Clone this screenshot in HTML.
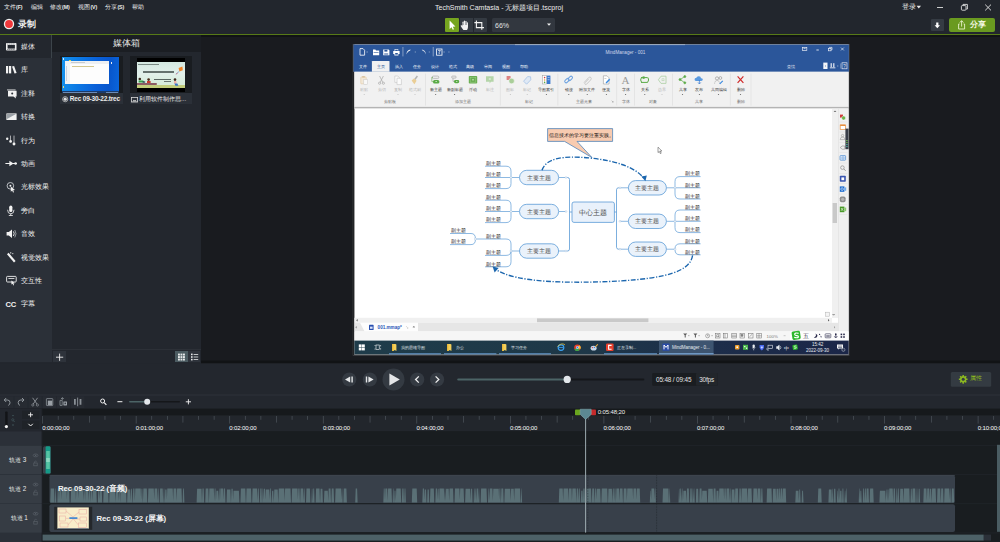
<!DOCTYPE html>
<html lang="zh">
<head>
<meta charset="utf-8">
<title>TechSmith Camtasia</title>
<style>
*{box-sizing:border-box;margin:0;padding:0}
html,body{width:1000px;height:542px;overflow:hidden;background:#1a1c20;font-family:"Liberation Sans",sans-serif;color:#e6e6e6}
.a{position:absolute}
.t{position:absolute;white-space:nowrap;line-height:1}
#menubar{left:0;top:0;width:1000px;height:34px;background:#22262d}
#greenline{left:0;top:34px;width:1000px;height:1px;background:#577a17}
#sidebar{left:0;top:35px;width:52px;height:328.4px;background:#2b3038}
#sidesel{left:0;top:35px;width:52px;height:22.6px;background:#23272e;border-right:1px solid #3c444a}
#bin{left:52px;top:35px;width:149px;height:328.4px;background:#23272e}
#binhead{left:52px;top:35px;width:149px;height:17px;background:#1b1e23}
#canvasbg{left:201px;top:35px;width:799px;height:329px;background:#191b1f;border-top:2.6px solid #111315}
#playbar{left:0;top:362px;width:1000px;height:33px;background:#23272e}
#tltool{left:0;top:395px;width:1000px;height:14px;background:#23272e;border-top:1px solid #2e333a}
#tl{left:0;top:409px;width:1000px;height:133px;background:#191d20}
.mi{font-size:6.3px;color:#ececec;top:3.8px}.ml{font-size:5.3px;font-weight:bold;letter-spacing:-0.1px}
.si{font-size:6.5px;color:#f2f2f2;left:21.4px;margin-top:1.5px}
</style>
</head>
<body>
<div class="a" id="menubar"></div>
<div class="a" id="greenline"></div>
<div class="a" id="canvasbg"></div>
<div class="a" id="sidebar"></div>
<div class="a" id="sidesel"></div>
<div class="a" id="bin"></div>
<div class="a" id="binhead"></div>
<div class="a" id="playbar"></div>
<div class="a" id="tltool"></div>
<div class="a" id="tl"></div>

<!-- MENU -->
<div class="t mi" style="left:4px">文件<span class="ml">(F)</span></div>
<div class="t mi" style="left:30.6px">编辑</div>
<div class="t mi" style="left:50px">修改<span class="ml">(M)</span></div>
<div class="t mi" style="left:78.4px">视图<span class="ml">(V)</span></div>
<div class="t mi" style="left:105.4px">分享<span class="ml">(S)</span></div>
<div class="t mi" style="left:131.8px">帮助</div>
<div class="t" style="left:435px;top:3.6px;font-size:7px;color:#ececec">TechSmith Camtasia - 无标题项目.tscproj</div>
<div class="t mi" style="left:902px;font-size:6.5px;top:3.6px">登录</div>


<!-- TOOLBAR -->
<svg class="a" style="left:3px;top:18px" width="12" height="12" viewBox="0 0 12 12"><circle cx="6" cy="6" r="5.2" fill="#f0f0f0"/><circle cx="6" cy="6" r="3.9" fill="#f0373a"/></svg>
<div class="t" style="left:18px;top:20px;font-size:8.5px;font-weight:bold;color:#f0f0f0">录制</div>

<!-- SIDEBAR -->
<svg class="a" style="left:0;top:35px" width="52" height="327" viewBox="0 0 52 327" fill="#f2f2f2">
 <!-- media film -->
 <g><rect x="6" y="8" width="10.5" height="7.6" rx="0.8"/><rect x="7.6" y="10" width="7.3" height="3.6" fill="#23272e"/>
 <g fill="#23272e"><rect x="7.4" y="8.6" width="1" height="0.8"/><rect x="9.4" y="8.6" width="1" height="0.8"/><rect x="11.4" y="8.6" width="1" height="0.8"/><rect x="13.4" y="8.6" width="1" height="0.8"/><rect x="7.4" y="14.2" width="1" height="0.8"/><rect x="9.4" y="14.2" width="1" height="0.8"/><rect x="11.4" y="14.2" width="1" height="0.8"/><rect x="13.4" y="14.2" width="1" height="0.8"/></g></g>
 <!-- library -->
 <g transform="translate(0,23.4)"><rect x="6" y="7.6" width="2.2" height="7.4"/><rect x="9" y="7.6" width="2.2" height="7.4"/><path d="M12 8.2 L14.1 7.6 L16.6 14.6 L14.5 15.2 Z"/></g>
 <!-- annotation -->
 <g transform="translate(0,46.8)"><path d="M7 7.6 H15.6 V8.6 H7Z" opacity=".8"/><path d="M8 9 H16.6 V14.6 H15.6 L16 16.6 L13.4 14.6 H8 Z"/><circle cx="12.2" cy="11.8" r="1" fill="#2b3038"/></g>
 <!-- transition -->
 <g transform="translate(0,70.2)"><rect x="6.4" y="8.2" width="10.2" height="6.6"/><path d="M7 13.8 L16 8.8 L7 8.8Z" fill="#9aa0a6"/></g>
 <!-- behaviors -->
 <g transform="translate(0,93.6)"><circle cx="7.2" cy="10.2" r="1.2"/><circle cx="10.6" cy="12.8" r="1.35"/><circle cx="14" cy="15.4" r="1.45"/><rect x="10.2" y="7" width="0.8" height="5" opacity=".8"/><rect x="13.6" y="7" width="0.8" height="7.6" opacity=".8"/></g>
 <!-- animation -->
 <g transform="translate(0,117)"><rect x="5.4" y="11" width="11.4" height="1"/><path d="M9.4 8.8 L13.6 11.5 L9.4 14.2Z"/><circle cx="15.6" cy="11.5" r="1.3"/></g>
 <!-- cursor fx -->
 <g transform="translate(0,140.4)"><circle cx="10.4" cy="10.4" r="3.3" fill="none" stroke="#c8ccd0" stroke-width="0.9"/><circle cx="10.4" cy="10.4" r="1" /><path d="M10.8 11.2 L15 14.6 L13.2 14.8 L14 16.8 L13 17.2 L12.2 15.2 L10.8 16.4Z"/></g>
 <!-- voice -->
 <g transform="translate(0,163.8)"><rect x="9.2" y="6.8" width="3.2" height="6.4" rx="1.6"/><path d="M7.6 11 Q7.6 15 10.8 15 Q14 15 14 11" fill="none" stroke="#f2f2f2" stroke-width="0.8"/><rect x="10.4" y="15" width="0.8" height="1.6"/><rect x="8.8" y="16.4" width="4" height="0.8"/></g>
 <!-- audio -->
 <g transform="translate(0,187.2)"><path d="M6.6 9.8 H8.8 L12 7.2 V15.8 L8.8 13.2 H6.6Z"/><path d="M13.4 9.2 Q15 11.5 13.4 13.8" fill="none" stroke="#f2f2f2" stroke-width="0.9"/><path d="M14.8 7.8 Q17.2 11.5 14.8 15.2" fill="none" stroke="#aeb4b8" stroke-width="0.8"/></g>
 <!-- visual fx -->
 <g transform="translate(0,210.6)"><path d="M7 8.6 L8.6 7.2 L15.6 15.4 L14 16.8Z"/><rect x="10.4" y="6.4" width="0.8" height="1.6"/><rect x="12" y="7.8" width="1.4" height="0.7"/></g>
 <!-- interactivity -->
 <g transform="translate(0,234)"><rect x="6.6" y="7.4" width="9.6" height="5.6" rx="0.8" fill="none" stroke="#f2f2f2" stroke-width="0.9"/><rect x="8.4" y="9.2" width="6" height="0.8"/><path d="M11.4 11.4 L14.8 14.2 L13.4 14.4 L14 16 L13.2 16.4 L12.6 14.8 L11.4 15.6Z"/></g>
</svg>
<div class="t" style="left:5.5px;top:300.6px;font-size:7.6px;font-weight:bold;color:#f2f2f2;letter-spacing:-0.2px">CC</div>
<div class="t si" style="top:42.5px">媒体</div>
<div class="t si" style="top:65.9px">库</div>
<div class="t si" style="top:89.3px">注释</div>
<div class="t si" style="top:112.7px">转换</div>
<div class="t si" style="top:136.1px">行为</div>
<div class="t si" style="top:159.5px">动画</div>
<div class="t si" style="top:182.9px">光标效果</div>
<div class="t si" style="top:206.3px">旁白</div>
<div class="t si" style="top:229.7px">音效</div>
<div class="t si" style="top:253.1px">视觉效果</div>
<div class="t si" style="top:276.5px">交互性</div>
<div class="t si" style="top:299.9px">字幕</div>

<!-- MEDIA BIN -->
<div class="t" style="left:52px;width:149px;text-align:center;top:39px;font-size:8.5px;color:#e8e8e8">媒体箱</div>


<!-- window controls -->
<svg class="a" style="left:915px;top:0" width="85" height="15" viewBox="0 0 85 15"><path d="M1.6 5.8 H6 L3.8 8.4Z" fill="#e8e8e8"/><rect x="22" y="7" width="6" height="0.9" fill="#e0e0e0"/><rect x="46.4" y="5.6" width="4.6" height="4.6" rx="0.8" fill="none" stroke="#e0e0e0" stroke-width="0.9"/><path d="M48 5.4 V4.4 H52.4 V9 H51.4" fill="none" stroke="#e0e0e0" stroke-width="0.9"/><path d="M70.2 4.6 L76 10.4 M76 4.6 L70.2 10.4" stroke="#e8e8e8" stroke-width="0.9"/></svg>
<!-- tool buttons -->
<div class="a" style="left:445px;top:18px;width:14px;height:13.5px;background:#76a51f;border-radius:1px"></div>
<div class="a" style="left:459.5px;top:18px;width:13.5px;height:13.5px;background:#343a42"></div>
<div class="a" style="left:473.5px;top:18px;width:13.5px;height:13.5px;background:#343a42;border-radius:0 1px 1px 0"></div>
<svg class="a" style="left:445px;top:18px" width="42" height="14" viewBox="0 0 42 14"><path d="M4.6 2.6 L4.6 11 L6.6 9.2 L7.8 11.8 L9 11.2 L7.8 8.8 L10.4 8.6Z" fill="#fff"/>
<g fill="#f2f2f2"><rect x="17.5" y="3.6" width="1.15" height="5" rx="0.57"/><rect x="18.95" y="2.6" width="1.15" height="6" rx="0.57"/><rect x="20.4" y="3" width="1.15" height="5.6" rx="0.57"/><rect x="21.85" y="4.2" width="1.1" height="4.6" rx="0.55"/><path d="M17.5 7 H22.95 V9 C22.95 10.4 22.4 11.2 22 12 H18.4 C17.4 10.8 16.4 9.4 15.7 8 C15.5 7.2 16.4 6.9 16.9 7.6 L17.5 8.6Z"/></g>
<path d="M31.4 2.4 V9.6 H39" fill="none" stroke="#f4f4f4" stroke-width="1.1"/><path d="M29.4 4.6 H36.8 V11.8" fill="none" stroke="#f4f4f4" stroke-width="1.1"/></svg>
<div class="a" style="left:492px;top:18px;width:62.5px;height:13.5px;background:#32373f;border-radius:1.5px"></div>
<div class="t" style="left:495px;top:21.5px;font-size:7px;color:#e0e0e0">66%</div>
<svg class="a" style="left:546px;top:22px" width="6" height="5" viewBox="0 0 6 5"><path d="M1 1.4 H5 L3 3.8Z" fill="#f0f0f0"/></svg>
<div class="a" style="left:931px;top:18.5px;width:12.5px;height:12.5px;background:#353b43;border-radius:1px"></div>
<svg class="a" style="left:931px;top:18.5px" width="13" height="13" viewBox="0 0 13 13"><path d="M5.2 3.4 H7.4 V6.2 H9 L6.3 9.2 L3.6 6.2 H5.2Z" fill="#fff"/></svg>
<div class="a" style="left:949px;top:18px;width:45.5px;height:13.7px;background:#6a9a20;border-radius:2px"></div>
<svg class="a" style="left:956px;top:19px" width="12" height="12" viewBox="0 0 12 12"><path d="M3.6 5 H2.6 V10 H8.6 V5 H7.6" fill="none" stroke="#e6f0c8" stroke-width="0.9"/><path d="M5.6 7.6 V2 M3.8 3.6 L5.6 1.6 L7.4 3.6" fill="none" stroke="#e6f0c8" stroke-width="0.9"/></svg>
<div class="t" style="left:970px;top:20.8px;font-size:8px;font-weight:bold;color:#f4f8e4">分享</div>

<!-- media items -->
<div class="a" style="left:60.4px;top:56.4px;width:62.3px;height:48px;background:#191c20"></div>
<div class="a" style="left:60.4px;top:93.2px;width:62.3px;height:11.2px;background:#2b3038"></div>
<div class="a" style="left:62.3px;top:57.4px;width:57.1px;height:35.4px;background:linear-gradient(95deg,#1492ec 0%,#0c78e4 30%,#0a60d8 60%,#0856cc 82%,#0a66dc 100%)"></div>
<div class="a" style="left:64.7px;top:60.9px;width:44.1px;height:23px;background:#fdfdfd"></div>
<div class="a" style="left:64.7px;top:60.9px;width:44.1px;height:3.6px;background:#eef0f2"></div>
<div class="a" style="left:64.7px;top:64.4px;width:5.8px;height:19.4px;background:#f0f2f4"></div>
<div class="a" style="left:71px;top:62.4px;width:14px;height:1px;background:#c8ccd0"></div>
<div class="a" style="left:72px;top:65.6px;width:22px;height:0.9px;background:#d4c890"></div>
<div class="a" style="left:66px;top:66px;width:1.2px;height:15px;background:#c8d4e0"></div>
<div class="a" style="left:68.6px;top:60.4px;width:2.6px;height:1px;background:#e8d84a"></div>
<div class="a" style="left:63px;top:58.2px;width:1.2px;height:1.6px;background:#d8e8f8"></div>
<div class="a" style="left:63px;top:86px;width:1.2px;height:1.8px;background:#e8d87a"></div>
<div class="a" style="left:110.6px;top:62.2px;width:1.2px;height:1.8px;background:#e8ecf0"></div>
<div class="a" style="left:62.3px;top:91.4px;width:57.1px;height:1.4px;background:#1a3a6a"></div>
<div class="a" style="left:63px;top:91.7px;width:34px;height:0.7px;background:#6a8ab8"></div>
<div class="a" style="left:106px;top:91.7px;width:12px;height:0.7px;background:#6a8ab8"></div>
<div class="a" style="left:130px;top:56.4px;width:62.2px;height:48px;background:#191c20"></div>
<div class="a" style="left:130px;top:93.2px;width:62.2px;height:11.2px;background:#2b3038"></div>
<div class="a" style="left:136.8px;top:57.6px;width:47.9px;height:34.8px;background:#000"></div>
<div class="a" style="left:136.8px;top:62.1px;width:47.9px;height:26.4px;background:linear-gradient(180deg,#d4e8e0 0%,#e2f0ea 45%,#d8ecdc 80%)"></div>
<div class="a" style="left:136.8px;top:84.9px;width:47.9px;height:3.6px;background:#c2cd7c"></div>
<div class="a" style="left:136.8px;top:82.8px;width:19.9px;height:2.6px;background:#8c5c64;border-radius:0 1px 1px 0"></div>
<div class="a" style="left:142.8px;top:71.3px;width:31px;height:1.3px;background:#66726e"></div>
<div class="a" style="left:154px;top:78.9px;width:17px;height:1px;background:#5a6662"></div>
<div class="a" style="left:163.5px;top:81.3px;width:7.5px;height:0.9px;background:#6a7672"></div>
<div class="a" style="left:137.6px;top:63.6px;width:21.4px;height:0.8px;background:#7a8a84"></div>
<svg class="a" style="left:136.8px;top:62.1px" width="48" height="27" viewBox="0 0 48 27"><path d="M41.6 6 L45.4 4.4 L45.8 8.2 L42.4 9.4Z" fill="#f08428"/><path d="M42.2 9.4 L38.8 12.2" stroke="#5a8ad0" stroke-width="0.6"/><path d="M40.4 10.8 l-1 1.6" stroke="#e04a4a" stroke-width="0.6"/>
<circle cx="2.8" cy="17" r="1.3" fill="#3a2a20"/><path d="M1.6 18.4 h4.6 l1.4 2.2 h-6z" fill="#36a04a"/><rect x="5.6" y="19.4" width="2.6" height="1.2" fill="#2a3a5a"/>
<circle cx="11.6" cy="17.6" r="1.3" fill="#4a2a18"/><rect x="10" y="19" width="3.6" height="2" fill="#c8382e"/>
<circle cx="38" cy="17.6" r="1.3" fill="#3a2418"/><rect x="37" y="19" width="2.4" height="2.8" fill="#f0b0a8"/><path d="M37.4 21.6 h3 l1 2.2 h-3z" fill="#3a74c8"/></svg>
<svg class="a" style="left:61.6px;top:95.8px" width="7" height="7" viewBox="0 0 7 7"><circle cx="3.2" cy="3.2" r="2.6" fill="none" stroke="#d8d8d8" stroke-width="0.7"/><circle cx="3.2" cy="3.2" r="1.6" fill="#e0e0e0"/></svg>
<div class="t" style="left:69.8px;top:95.7px;font-size:6.5px;font-weight:bold;color:#ececec;letter-spacing:-0.2px">Rec 09-30-22.trec</div>
<svg class="a" style="left:131.2px;top:96.6px" width="8" height="6" viewBox="0 0 8 6"><rect x="0.4" y="0.4" width="6.2" height="4.6" fill="none" stroke="#d8d8d8" stroke-width="0.8"/><path d="M1.4 4.4 L2.8 2.8 L3.8 3.6 L4.6 3 L5.8 4.4Z" fill="#d8d8d8"/></svg>
<div class="t" style="left:139px;top:96px;font-size:6.2px;color:#ececec">利用软件制作思...</div>
<!-- bin bottom bar -->
<div class="a" style="left:52px;top:349.4px;width:149px;height:14px;background:#23272e;border-top:1px solid #2c3037"></div>
<div class="a" style="left:52.8px;top:350.8px;width:12.8px;height:11.6px;background:#2e333b"></div>
<svg class="a" style="left:52.8px;top:350.6px" width="13" height="12" viewBox="0 0 13 12"><path d="M6.6 2.6 V9.8 M3 6.2 H10.2" stroke="#f0f0f0" stroke-width="0.9"/></svg>
<div class="a" style="left:174.5px;top:350.8px;width:13px;height:11.6px;background:#4c5c62"></div>
<div class="a" style="left:188px;top:350.8px;width:11.8px;height:11.6px;background:#2e333b"></div>
<svg class="a" style="left:174.7px;top:350.6px" width="26" height="12" viewBox="0 0 26 12" fill="#e8eaec"><rect x="3" y="2.6" width="1.9" height="1.9"/><rect x="5.5" y="2.6" width="1.9" height="1.9"/><rect x="8" y="2.6" width="1.9" height="1.9"/><rect x="3" y="5.1" width="1.9" height="1.9"/><rect x="5.5" y="5.1" width="1.9" height="1.9"/><rect x="8" y="5.1" width="1.9" height="1.9"/><rect x="3" y="7.6" width="1.9" height="1.9"/><rect x="5.5" y="7.6" width="1.9" height="1.9"/><rect x="8" y="7.6" width="1.9" height="1.9"/>
<rect x="16" y="2.6" width="1.6" height="1.6"/><rect x="18.6" y="3" width="4.6" height="0.8"/><rect x="16" y="5.2" width="1.6" height="1.6"/><rect x="18.6" y="5.6" width="4.6" height="0.8"/><rect x="16" y="7.8" width="1.6" height="1.6"/><rect x="18.6" y="8.2" width="4.6" height="0.8"/></svg>

<!-- CANVAS-START -->
<svg class="a" style="left:352px;top:43px" width="499" height="314" viewBox="352 43 499 314" font-family="Liberation Sans, sans-serif">
<rect x="352.8" y="44" width="496.6" height="311.6" fill="#5c5e62"/>
<rect x="353.3" y="71.8" width="496" height="283.4" fill="#0b0c0e"/>
<rect x="354.4" y="44.6" width="494.2" height="310.2" fill="#ffffff"/>
<rect x="353.5" y="44.6" width="495.4" height="27.2" fill="#2b569a"/>
<rect x="515" y="44.4" width="170" height="0.7" fill="#c8d0dc" opacity=".8"/>
<g fill="#fff" stroke="none">
<path d="M360 48.6 h3 l1.6 1.6 v5 h-4.6z" fill="none" stroke="#fff" stroke-width="0.8"/>
<rect x="366.6" y="51.6" width="1" height="0.8" opacity=".8"/>
<path d="M373 49.6 h2.4 l0.6 0.8 h3.2 v4.8 h-6.2z"/><rect x="373.6" y="52" width="5" height="0.6" fill="#2b569a"/>
<path d="M383.2 49.4 h5.4 l0.8 0.8 v5 h-6.2z"/><rect x="384.4" y="49.8" width="3" height="1.8" fill="#2b569a"/><rect x="384.2" y="53" width="4" height="2" fill="#2b569a" opacity=".5"/>
<path d="M394.6 49 h3.6 v2 h1.4 v3 h-1.2 v1.4 h-4 v-1.4 h-1.2 v-3 h1.4z"/><rect x="395.2" y="53" width="2.6" height="1.6" fill="#2b569a"/><rect x="395.2" y="49.6" width="2.6" height="1.4" fill="#2b569a"/>
<rect x="402.6" y="47" width="0.7" height="9.4" opacity=".6"/>
<path d="M406.4 54.4 c0.2 -2.6 1.6 -4.4 4.2 -4.8 l-0.4 1 c-1.6 0.6 -2.6 1.6 -3.8 3.8z"/>
<rect x="414.8" y="51.6" width="0.9" height="0.8" opacity=".7"/>
<path d="M426 54.4 c-0.2 -2.6 -1.6 -4.4 -4.2 -4.8 l0.4 1 c1.6 0.6 2.6 1.6 3.8 3.8z" opacity=".75"/>
<rect x="428.8" y="51.6" width="0.9" height="0.8" opacity=".6"/>
<rect x="432.8" y="47" width="0.7" height="9.4" opacity=".6"/>
<rect x="436.6" y="49" width="5.4" height="6.2" fill="none" stroke="#fff" stroke-width="0.8"/><path d="M438 50.4 h2.4 l-1.2 2 v1.6" fill="none" stroke="#fff" stroke-width="0.7"/>
<rect x="443.6" y="51.6" width="0.9" height="0.8" opacity=".8"/><rect x="448.6" y="51.4" width="0.7" height="1.2" opacity=".6"/>
</g>
<text x="625.4" y="53.8" font-size="4.6" fill="#cfd8ea" text-anchor="middle">MindManager - 001</text>
<g stroke="#e8ecf4" stroke-width="0.7" fill="none"><rect x="802.4" y="47.4" width="4.4" height="3.2"/><path d="M803.6 48.6 h2"/><path d="M816.4 50 h2.4" stroke-width="0.9"/><rect x="828.4" y="48.4" width="2.6" height="2.4"/><path d="M829.4 48.2 v-0.8 h2.6 v2.4 h-0.8"/><path d="M841 47.6 l2.8 2.8 m0 -2.8 l-2.8 2.8"/></g>
<path d="M371.9 71.8 V61.6 q0 -0.7 0.7 -0.7 H388.8 q0.7 0 0.7 0.7 V71.8z" fill="#f1f1f1"/>
<text x="363" y="67.6" font-size="4.3" fill="#fff" text-anchor="middle">文件</text>
<text x="380.8" y="67.6" font-size="4.3" fill="#2b569a" text-anchor="middle">主页</text>
<text x="398.6" y="67.6" font-size="4.3" fill="#fff" text-anchor="middle">插入</text>
<text x="416.6" y="67.6" font-size="4.3" fill="#fff" text-anchor="middle">任务</text>
<text x="434.6" y="67.6" font-size="4.3" fill="#fff" text-anchor="middle">设计</text>
<text x="452.6" y="67.6" font-size="4.3" fill="#fff" text-anchor="middle">格式</text>
<text x="470.4" y="67.6" font-size="4.3" fill="#fff" text-anchor="middle">高级</text>
<text x="488.4" y="67.6" font-size="4.3" fill="#fff" text-anchor="middle">审阅</text>
<text x="506" y="67.6" font-size="4.3" fill="#fff" text-anchor="middle">视图</text>
<text x="523.8" y="67.6" font-size="4.3" fill="#fff" text-anchor="middle">帮助</text>
<text x="791.4" y="67.6" font-size="4.3" fill="#e0e6f0" text-anchor="middle">查找</text>
<rect x="823.3" y="62.6" width="4.2" height="6.4" fill="#f4f6fa"/><rect x="825" y="65.6" width="0.8" height="0.8" fill="#2b569a"/>
<g fill="#e8ecf4"><rect x="829.8" y="67.4" width="5.6" height="0.9"/><rect x="830.6" y="63.2" width="1.2" height="4"/><rect x="833.2" y="63.2" width="1.2" height="4"/><rect x="837.4" y="65.6" width="0.8" height="0.8"/><rect x="840.2" y="63.4" width="0.5" height="5.2" opacity=".6"/></g>
<rect x="842" y="62.8" width="5" height="6" fill="none" stroke="#e8ecf4" stroke-width="0.7"/><text x="844.5" y="67.6" font-size="4.6" fill="#e8ecf4" text-anchor="middle">?</text>
<rect x="354.4" y="71.8" width="494.2" height="35.4" fill="#f1f1f1"/>
<rect x="354.4" y="106.9" width="494.2" height="1.5" fill="#b4b4b4"/>
<rect x="354.4" y="108.3" width="494.2" height="0.6" fill="#e4e4e4"/>
<rect x="425.2" y="73.6" width="0.6" height="32" fill="#dcdcdc"/>
<rect x="499.9" y="73.6" width="0.6" height="32" fill="#dcdcdc"/>
<rect x="557.6" y="73.6" width="0.6" height="32" fill="#dcdcdc"/>
<rect x="616.5" y="73.6" width="0.6" height="32" fill="#dcdcdc"/>
<rect x="634.4000000000001" y="73.6" width="0.6" height="32" fill="#dcdcdc"/>
<rect x="672.0" y="73.6" width="0.6" height="32" fill="#dcdcdc"/>
<rect x="729.9000000000001" y="73.6" width="0.6" height="32" fill="#dcdcdc"/>
<rect x="750.7" y="73.6" width="0.6" height="32" fill="#dcdcdc"/>
<text x="390" y="103.2" font-size="4.3" fill="#6e6e6e" text-anchor="middle">剪贴板</text>
<text x="463" y="103.2" font-size="4.3" fill="#6e6e6e" text-anchor="middle">添加主题</text>
<text x="529.3" y="103.2" font-size="4.3" fill="#6e6e6e" text-anchor="middle">标记</text>
<text x="584.3" y="103.2" font-size="4.3" fill="#6e6e6e" text-anchor="middle">主题元素</text>
<text x="625.6" y="103.2" font-size="4.3" fill="#6e6e6e" text-anchor="middle">字体</text>
<text x="653.2" y="103.2" font-size="4.3" fill="#6e6e6e" text-anchor="middle">对象</text>
<text x="699.4" y="103.2" font-size="4.3" fill="#6e6e6e" text-anchor="middle">共享</text>
<text x="740.5" y="103.2" font-size="4.3" fill="#6e6e6e" text-anchor="middle">删除</text>
<path d="M611.6 100.6 l1.6 1.6 m0 -1.2 v1.2 h-1.2" stroke="#888" stroke-width="0.4" fill="none"/>
<text x="364.2" y="90.8" font-size="4.4" fill="#b4b4b4" text-anchor="middle">粘贴</text>
<path d="M363.5 94 h1.4 l-0.7 0.9z" fill="#b4b4b4"/>
<text x="381.5" y="90.8" font-size="4.4" fill="#b4b4b4" text-anchor="middle">剪切</text>
<text x="398" y="90.8" font-size="4.4" fill="#b4b4b4" text-anchor="middle">复制</text>
<path d="M397.3 94 h1.4 l-0.7 0.9z" fill="#b4b4b4"/>
<text x="415" y="90.8" font-size="4.4" fill="#b4b4b4" text-anchor="middle">格式刷</text>
<path d="M414.3 94 h1.4 l-0.7 0.9z" fill="#b4b4b4"/>
<text x="435.7" y="90.8" font-size="4.4" fill="#3c3c3c" text-anchor="middle">新主题</text>
<path d="M435.0 94 h1.4 l-0.7 0.9z" fill="#3c3c3c"/>
<text x="454.6" y="90.8" font-size="4.4" fill="#3c3c3c" text-anchor="middle">新副标题</text>
<path d="M453.90000000000003 94 h1.4 l-0.7 0.9z" fill="#3c3c3c"/>
<text x="473" y="90.8" font-size="4.4" fill="#3c3c3c" text-anchor="middle">浮动</text>
<text x="489.8" y="90.8" font-size="4.4" fill="#b4b4b4" text-anchor="middle">标注</text>
<text x="510.4" y="90.8" font-size="4.4" fill="#b4b4b4" text-anchor="middle">图标</text>
<path d="M509.7 94 h1.4 l-0.7 0.9z" fill="#b4b4b4"/>
<text x="527.2" y="90.8" font-size="4.4" fill="#b4b4b4" text-anchor="middle">标记</text>
<path d="M526.5 94 h1.4 l-0.7 0.9z" fill="#b4b4b4"/>
<text x="546.4" y="90.8" font-size="4.4" fill="#3c3c3c" text-anchor="middle">导图索引</text>
<path d="M545.6999999999999 94 h1.4 l-0.7 0.9z" fill="#3c3c3c"/>
<text x="568.8" y="90.8" font-size="4.4" fill="#3c3c3c" text-anchor="middle">链接</text>
<path d="M568.0999999999999 94 h1.4 l-0.7 0.9z" fill="#3c3c3c"/>
<text x="587.2" y="90.8" font-size="4.4" fill="#3c3c3c" text-anchor="middle">附加文件</text>
<path d="M586.5 94 h1.4 l-0.7 0.9z" fill="#3c3c3c"/>
<text x="606.4" y="90.8" font-size="4.4" fill="#3c3c3c" text-anchor="middle">便笺</text>
<path d="M605.6999999999999 94 h1.4 l-0.7 0.9z" fill="#3c3c3c"/>
<text x="625.6" y="90.8" font-size="4.4" fill="#3c3c3c" text-anchor="middle">字体</text>
<path d="M624.9 94 h1.4 l-0.7 0.9z" fill="#3c3c3c"/>
<text x="644.8" y="90.8" font-size="4.4" fill="#3c3c3c" text-anchor="middle">关系</text>
<path d="M644.0999999999999 94 h1.4 l-0.7 0.9z" fill="#3c3c3c"/>
<text x="662" y="90.8" font-size="4.4" fill="#b4b4b4" text-anchor="middle">边界</text>
<path d="M661.3 94 h1.4 l-0.7 0.9z" fill="#b4b4b4"/>
<text x="682.5" y="90.8" font-size="4.4" fill="#3c3c3c" text-anchor="middle">共享</text>
<path d="M681.8 94 h1.4 l-0.7 0.9z" fill="#3c3c3c"/>
<text x="699.4" y="90.8" font-size="4.4" fill="#3c3c3c" text-anchor="middle">发布</text>
<path d="M698.6999999999999 94 h1.4 l-0.7 0.9z" fill="#3c3c3c"/>
<text x="718.5" y="90.8" font-size="4.4" fill="#3c3c3c" text-anchor="middle">共同编辑</text>
<path d="M717.8 94 h1.4 l-0.7 0.9z" fill="#3c3c3c"/>
<text x="740.5" y="90.8" font-size="4.4" fill="#3c3c3c" text-anchor="middle">删除</text>
<path d="M739.8 94 h1.4 l-0.7 0.9z" fill="#3c3c3c"/>
<g opacity=".55"><rect x="360.8" y="77" width="5.4" height="6.8" rx="0.6" fill="#f4e2c4" stroke="#d8a860" stroke-width="0.6"/><rect x="362.2" y="76" width="2.6" height="1.6" fill="#c8a060"/><rect x="363.8" y="79.6" width="3.8" height="4.8" fill="#fff" stroke="#aaa" stroke-width="0.5"/></g>
<g stroke="#a8a8a8" stroke-width="0.7" fill="none"><path d="M379.6 76 l3.2 6.4 M383.4 76 l-3.2 6.4"/><circle cx="379.6" cy="83.2" r="1.1"/><circle cx="383.4" cy="83.2" r="1.1"/></g>
<g stroke="#c4c4c4" stroke-width="0.6" fill="#fbfbfb"><path d="M394.8 76 h3 l1.4 1.4 v5 h-4.4z"/><path d="M397 78.2 h3 l1.4 1.4 v5 h-4.4z"/></g>
<g opacity=".7"><path d="M416.8 75.6 l1.2 1 l-2.6 3.4 l-1.2 -1z" fill="#9a9a9a"/><path d="M411.6 80.4 l2.4 -2 l2.6 2.4 l-2.2 3.4z" fill="#e8c070"/></g>
<g><rect x="432.2" y="76" width="6.6" height="2.6" rx="1.2" fill="#e8e8e8" stroke="#9a9a9a" stroke-width="0.5"/><path d="M433 77.4 h-1.2 v4.2 h1.2" fill="none" stroke="#6aaa50" stroke-width="0.6"/><rect x="433" y="80" width="6.4" height="3.4" rx="1.5" fill="#5aaa46"/><rect x="435.4" y="81.4" width="1.6" height="0.6" fill="#fff"/></g>
<g><rect x="451.6" y="76" width="4.6" height="2.2" rx="1" fill="#e4e4e4" stroke="#9a9a9a" stroke-width="0.5"/><path d="M453 78.4 v3 h1.2" fill="none" stroke="#8a8a8a" stroke-width="0.5"/><rect x="454" y="80" width="5.2" height="3.2" rx="1.4" fill="#5aaa46"/><rect x="456" y="81.3" width="1.4" height="0.6" fill="#fff"/></g>
<rect x="468.8" y="76" width="8.4" height="7.6" rx="0.8" fill="#6aae52"/><rect x="470.2" y="77.4" width="5.6" height="4.8" fill="none" stroke="#9ccf88" stroke-width="0.5"/><rect x="472.4" y="79.2" width="1.2" height="1.2" fill="#e8f4e0"/>
<g opacity=".5"><path d="M486 76.2 h7.6 v5.6 h-2.6 l-1.4 1.8 v-1.8 h-3.6z" fill="#7aba64"/><rect x="488.8" y="78.4" width="2" height="1.2" fill="#e0f0d8"/></g>
<g opacity=".6"><rect x="506.6" y="76" width="4" height="4" rx="0.6" fill="#d03a3a"/><circle cx="511.6" cy="81" r="2.8" fill="#7ab860" stroke="#fff" stroke-width="0.5"/></g>
<g opacity=".7"><path d="M523.6 81.2 l4 -4.6 l3 0.2 l0.2 3 l-4.2 4.4z" fill="#d8e6f8" stroke="#7aa8e0" stroke-width="0.7"/></g>
<g><rect x="542.6" y="75.6" width="4" height="8.4" fill="#fff" stroke="#9a9a9a" stroke-width="0.5"/><rect x="546.8" y="75.6" width="3.6" height="8.4" fill="#3a78d0"/><circle cx="544.6" cy="77.6" r="0.8" fill="#d03a3a"/><circle cx="544.6" cy="80" r="0.8" fill="#e8a030"/><circle cx="544.6" cy="82.4" r="0.8" fill="#5aaa46"/><rect x="547.6" y="77" width="2" height="0.5" fill="#fff"/><rect x="547.6" y="79.6" width="2" height="0.5" fill="#fff"/></g>
<g fill="none" stroke="#6aa0e0" stroke-width="1"><rect x="564.4" y="79.2" width="5" height="2.8" rx="1.4" transform="rotate(-45 566.9 80.6)"/><rect x="567.8" y="77" width="5" height="2.8" rx="1.4" transform="rotate(-45 570.3 78.4)"/></g>
<g fill="none" stroke="#c0c0c0" stroke-width="0.8"><path d="M584 82.6 l4.6 -5 q1.4 -1.2 2.4 0 q0.8 1.2 -0.4 2.4 l-4 4.2 q-1 0.8 -1.6 0 q-0.6 -0.8 0.2 -1.6 l3.6 -3.8"/></g>
<g><path d="M603.4 75.8 h3.6 l2 2 v6.2 h-5.6z" fill="#fff" stroke="#8a8a8a" stroke-width="0.5"/><path d="M605.6 82.6 l3.6 -3.8 l1 1 l-3.6 3.6z" fill="#3a8ae0"/><rect x="604.4" y="78" width="2" height="0.4" fill="#8a8a8a"/></g>
<text x="625.6" y="84" font-size="11" fill="#9a9a9a" text-anchor="middle" font-family="Liberation Serif, serif">A</text>
<g fill="none" stroke="#5aaa46" stroke-width="1"><path d="M641 77.6 h6.6 M641 82.4 h6.6"/><rect x="642.6" y="76.4" width="2" height="2.4" fill="#5aaa46" stroke="none"/><path d="M648 77.6 q1.4 2.4 -0.4 4.8 M641.4 77.6 q-1.6 2.4 0.2 4.8"/></g>
<g opacity=".45"><path d="M658.4 79.8 l2.6 -3.6 h5 v7.2 h-5z" fill="none" stroke="#5aaa46" stroke-width="0.8"/><rect x="662" y="78.8" width="2" height="2" fill="none" stroke="#5aaa46" stroke-width="0.5"/></g>
<g fill="#5aaa46" stroke="#5aaa46" stroke-width="0.7"><path d="M684.6 76.6 l-4.4 3 l4.4 3" fill="none"/><circle cx="684.8" cy="76.6" r="1"/><circle cx="680" cy="79.6" r="1"/><circle cx="684.8" cy="82.8" r="1"/></g>
<g><path d="M696 81 q-1.6 -0.2 -1.4 -1.8 q0.2 -1.4 1.6 -1.2 q0.6 -2 2.8 -1.8 q1.8 0.2 2 2 q1.8 0 1.8 1.4 q0 1.4 -1.6 1.4z" fill="#5a9ae0"/><path d="M699.4 80 v3.8 m-1.4 -1.4 l1.4 1.6 l1.4 -1.6" stroke="#3a7ad0" stroke-width="0.7" fill="none"/></g>
<g fill="none" stroke="#7a7a7a" stroke-width="0.5"><circle cx="717" cy="78.4" r="1.6"/><circle cx="720.4" cy="78" r="1.4"/><path d="M714.6 83.6 q0.2 -3 2.6 -3 q2.2 0 2.4 3" stroke-dasharray="0.8 0.5"/><path d="M719.4 83.4 l3 -3 l0.8 0.8 l-3 3z" fill="#3a8ae0" stroke="none"/></g>
<path d="M737.6 76.4 l5.8 6.4 M743.4 76.4 l-5.8 6.4" stroke="#d02a2a" stroke-width="1.2"/>
<rect x="832" y="108.8" width="6.4" height="209.2" fill="#f0f0f0"/>
<rect x="832.6" y="203" width="4.4" height="20" fill="#c9c9c9"/>
<path d="M833.6 112 l1.4 -1.6 l1.4 1.6z" fill="#6a6a6a"/>
<rect x="838.4" y="108.8" width="10.2" height="222.8" fill="#f0f0f0"/><rect x="838.4" y="108.8" width="0.5" height="222.8" fill="#d8d8d8"/>
<rect x="839.4" y="121.8" width="8" height="0.4" fill="#dcdcdc"/>
<rect x="839.4" y="131.8" width="8" height="0.4" fill="#dcdcdc"/>
<rect x="839.4" y="142.20000000000002" width="8" height="0.4" fill="#dcdcdc"/>
<rect x="839.4" y="152.4" width="8" height="0.4" fill="#dcdcdc"/>
<rect x="839.4" y="162.8" width="8" height="0.4" fill="#dcdcdc"/>
<rect x="839.4" y="173.0" width="8" height="0.4" fill="#dcdcdc"/>
<rect x="839.4" y="183.4" width="8" height="0.4" fill="#dcdcdc"/>
<rect x="839.4" y="193.8" width="8" height="0.4" fill="#dcdcdc"/>
<rect x="839.4" y="204.0" width="8" height="0.4" fill="#dcdcdc"/>
<rect x="839.4" y="214.20000000000002" width="8" height="0.4" fill="#dcdcdc"/>
<g><rect x="840" y="114.6" width="3" height="3" fill="#d03a3a"/><circle cx="843.6" cy="118" r="2" fill="#6ab04a" stroke="#fff" stroke-width="0.4"/></g>
<g><rect x="840.2" y="125" width="5.2" height="4.6" fill="#fff" stroke="#e89040" stroke-width="0.7"/><rect x="840.2" y="124.6" width="5.2" height="1.4" fill="#e89040"/></g>
<g fill="none" stroke="#9a9a9a" stroke-width="0.6"><circle cx="842.6" cy="135.6" r="1.2"/><path d="M840.2 139.6 q0.2 -2.6 2.4 -2.6 q2.2 0 2.4 2.6z"/></g>
<g fill="none" stroke="#8a8a8a" stroke-width="0.6"><path d="M840.2 147.6 l2 -1.6 h2.6 v3.2 h-2.6z"/></g>
<g><rect x="840" y="155.6" width="5.6" height="4.6" rx="0.6" fill="#dce8f8" stroke="#4a8ad0" stroke-width="0.7"/><circle cx="843" cy="158" r="1.2" fill="none" stroke="#4a8ad0" stroke-width="0.5"/></g>
<g fill="none" stroke="#8a8a8a" stroke-width="0.7"><circle cx="842.4" cy="167.6" r="1.8"/><path d="M843.8 169 l1.8 1.8" stroke-width="0.9"/></g>
<g><rect x="839.8" y="175.8" width="6" height="6" rx="0.8" fill="#3a56b0"/><rect x="841.4" y="177.4" width="2.8" height="2.8" fill="#fff"/></g>
<g><rect x="839.8" y="186.4" width="4.6" height="5.4" fill="#1a6ad0"/><circle cx="842.1" cy="189.1" r="1.3" fill="none" stroke="#fff" stroke-width="0.6"/><rect x="844.6" y="187.4" width="1.6" height="3.4" fill="#6aaaf0"/></g>
<g><rect x="839.8" y="196.4" width="5.8" height="5.8" rx="1.8" fill="#8e8e8e"/><circle cx="842.7" cy="199.3" r="1.6" fill="#b4b4b4"/></g>
<g><rect x="839.8" y="206.6" width="4.6" height="5.6" fill="#4a9a2a"/><path d="M841 208 l2.2 2.8 m0 -2.8 l-2.2 2.8" stroke="#fff" stroke-width="0.6"/><rect x="844.6" y="207.6" width="1.6" height="3.6" fill="#8aca6a"/></g>
<rect x="845.4" y="128.6" width="3.2" height="20.6" fill="#3a3f4a"/><rect x="846.2" y="140" width="1.4" height="1" fill="#6aba4a"/><rect x="846.2" y="142" width="1.4" height="1" fill="#6aba4a"/><rect x="846.2" y="144" width="1.4" height="1" fill="#4ab0a0"/><rect x="846.2" y="146" width="1.4" height="1" fill="#4ab0a0"/>
<path d="M559 177.5 H566" stroke="#5b9bd5" stroke-width="0.7"/>
<path d="M511 177.5 H519.5" stroke="#5b9bd5" stroke-width="0.7"/>
<path d="M559 211.5 H566" stroke="#5b9bd5" stroke-width="0.7"/>
<path d="M511 211.5 H519.5" stroke="#5b9bd5" stroke-width="0.7"/>
<path d="M559 251 H566" stroke="#5b9bd5" stroke-width="0.7"/>
<path d="M511 251 H519.5" stroke="#5b9bd5" stroke-width="0.7"/>
<path d="M566 177.5 H567.5 Q569.5 177.5 569.5 179.5 V249 Q569.5 251 567.5 251 H566 M569.5 212 H572" fill="none" stroke="#5b9bd5" stroke-width="0.8"/>
<circle cx="566" cy="177.5" r="0.9" fill="#fff" stroke="#9ab8d8" stroke-width="0.4"/>
<circle cx="566" cy="211.5" r="0.9" fill="#fff" stroke="#9ab8d8" stroke-width="0.4"/>
<circle cx="566" cy="251" r="0.9" fill="#fff" stroke="#9ab8d8" stroke-width="0.4"/>
<path d="M485 166.2 H506 Q511 166.2 511 171.2 V177.5" fill="none" stroke="#5b9bd5" stroke-width="0.7"/>
<text x="486" y="164.89999999999998" font-size="4.6" fill="#262626">副主题</text>
<path d="M485 177.5 H511" fill="none" stroke="#5b9bd5" stroke-width="0.7"/>
<text x="486" y="176.2" font-size="4.6" fill="#262626">副主题</text>
<path d="M485 188.6 H506 Q511 188.6 511 183.6 V177.5" fill="none" stroke="#5b9bd5" stroke-width="0.7"/>
<text x="486" y="187.29999999999998" font-size="4.6" fill="#262626">副主题</text>
<circle cx="511" cy="177.5" r="1" fill="#fff" stroke="#9ab8d8" stroke-width="0.4"/>
<path d="M485 200.2 H506 Q511 200.2 511 205.2 V211.5" fill="none" stroke="#5b9bd5" stroke-width="0.7"/>
<text x="486" y="198.89999999999998" font-size="4.6" fill="#262626">副主题</text>
<path d="M485 211.5 H511" fill="none" stroke="#5b9bd5" stroke-width="0.7"/>
<text x="486" y="210.2" font-size="4.6" fill="#262626">副主题</text>
<path d="M485 222.6 H506 Q511 222.6 511 217.6 V211.5" fill="none" stroke="#5b9bd5" stroke-width="0.7"/>
<text x="486" y="221.29999999999998" font-size="4.6" fill="#262626">副主题</text>
<circle cx="511" cy="211.5" r="1" fill="#fff" stroke="#9ab8d8" stroke-width="0.4"/>
<path d="M485 239 H506 Q511 239 511 244 V251" fill="none" stroke="#5b9bd5" stroke-width="0.7"/>
<text x="486" y="237.7" font-size="4.6" fill="#262626">副主题</text>
<path d="M485 255.4 H506 Q511 255.4 511 251.0 V251" fill="none" stroke="#5b9bd5" stroke-width="0.7"/>
<text x="486" y="254.1" font-size="4.6" fill="#262626">副主题</text>
<path d="M485 266.8 H506 Q511 266.8 511 261.8 V251" fill="none" stroke="#5b9bd5" stroke-width="0.7"/>
<text x="486" y="265.5" font-size="4.6" fill="#262626">副主题</text>
<circle cx="511" cy="251" r="1" fill="#fff" stroke="#9ab8d8" stroke-width="0.4"/>
<path d="M475.4 239 H485" stroke="#5b9bd5" stroke-width="0.7"/>
<path d="M450 233.5 H471 Q475.4 233.5 475.4 238.5 V239" fill="none" stroke="#5b9bd5" stroke-width="0.7"/>
<text x="451" y="232.2" font-size="4.6" fill="#262626">副主题</text>
<path d="M450 244.6 H471 Q475.4 244.6 475.4 239.6 V239" fill="none" stroke="#5b9bd5" stroke-width="0.7"/>
<text x="451" y="243.29999999999998" font-size="4.6" fill="#262626">副主题</text>
<circle cx="475.4" cy="239" r="1" fill="#fff" stroke="#9ab8d8" stroke-width="0.4"/>
<rect x="519.5" y="170.3" width="39.10000000000002" height="14.399999999999977" rx="7.199999999999989" fill="#eaf2fb" stroke="#5b9bd5" stroke-width="0.8"/>
<text x="539.05" y="179.588" font-size="5.8" fill="#4a4a4a" text-anchor="middle">主要主题</text>
<rect x="519.5" y="204.3" width="39.10000000000002" height="14.399999999999977" rx="7.199999999999989" fill="#eaf2fb" stroke="#5b9bd5" stroke-width="0.8"/>
<text x="539.05" y="213.588" font-size="5.8" fill="#4a4a4a" text-anchor="middle">主要主题</text>
<rect x="519.5" y="243.8" width="39.10000000000002" height="14.399999999999977" rx="7.199999999999989" fill="#eaf2fb" stroke="#5b9bd5" stroke-width="0.8"/>
<text x="539.05" y="253.088" font-size="5.8" fill="#4a4a4a" text-anchor="middle">主要主题</text>
<rect x="572" y="202" width="42.4" height="20.4" rx="2" fill="#e9f1fb" stroke="#5b9bd5" stroke-width="0.8"/>
<text x="593.2" y="214.6" font-size="6.6" fill="#4a4a4a" text-anchor="middle">中心主题</text>
<path d="M614.4 212 H616.5 M620 187.8 H618.5 Q616.5 187.8 616.5 189.8 V247.2 Q616.5 249.2 618.5 249.2 H620" fill="none" stroke="#5b9bd5" stroke-width="0.8"/>
<path d="M620 187.8 H628.4 M666.4 187.8 H675" stroke="#5b9bd5" stroke-width="0.7"/>
<circle cx="620" cy="187.8" r="0.9" fill="#fff" stroke="#9ab8d8" stroke-width="0.4"/>
<path d="M620 221.3 H628.4 M666.4 221.3 H675" stroke="#5b9bd5" stroke-width="0.7"/>
<circle cx="620" cy="221.3" r="0.9" fill="#fff" stroke="#9ab8d8" stroke-width="0.4"/>
<path d="M620 249.2 H628.4 M666.4 249.2 H675" stroke="#5b9bd5" stroke-width="0.7"/>
<circle cx="620" cy="249.2" r="0.9" fill="#fff" stroke="#9ab8d8" stroke-width="0.4"/>
<path d="M700.6 176.6 H680 Q675 176.6 675 181.6 V187.8" fill="none" stroke="#5b9bd5" stroke-width="0.7"/>
<text x="700.1" y="175.29999999999998" font-size="4.6" fill="#262626" text-anchor="end">副主题</text>
<path d="M700.6 187.8 H675" fill="none" stroke="#5b9bd5" stroke-width="0.7"/>
<text x="700.1" y="186.5" font-size="4.6" fill="#262626" text-anchor="end">副主题</text>
<path d="M700.6 199 H680 Q675 199 675 194 V187.8" fill="none" stroke="#5b9bd5" stroke-width="0.7"/>
<text x="700.1" y="197.7" font-size="4.6" fill="#262626" text-anchor="end">副主题</text>
<circle cx="675" cy="187.8" r="1" fill="#fff" stroke="#9ab8d8" stroke-width="0.4"/>
<path d="M700.6 210 H680 Q675 210 675 215 V221.3" fill="none" stroke="#5b9bd5" stroke-width="0.7"/>
<text x="700.1" y="208.7" font-size="4.6" fill="#262626" text-anchor="end">副主题</text>
<path d="M700.6 221.3 H675" fill="none" stroke="#5b9bd5" stroke-width="0.7"/>
<text x="700.1" y="220.0" font-size="4.6" fill="#262626" text-anchor="end">副主题</text>
<path d="M700.6 232.6 H680 Q675 232.6 675 227.6 V221.3" fill="none" stroke="#5b9bd5" stroke-width="0.7"/>
<text x="700.1" y="231.29999999999998" font-size="4.6" fill="#262626" text-anchor="end">副主题</text>
<circle cx="675" cy="221.3" r="1" fill="#fff" stroke="#9ab8d8" stroke-width="0.4"/>
<path d="M700.6 243.8 H680 Q675 243.8 675 248.8 V249.2" fill="none" stroke="#5b9bd5" stroke-width="0.7"/>
<text x="700.1" y="242.5" font-size="4.6" fill="#262626" text-anchor="end">副主题</text>
<path d="M700.6 254.8 H680 Q675 254.8 675 249.8 V249.2" fill="none" stroke="#5b9bd5" stroke-width="0.7"/>
<text x="700.1" y="253.5" font-size="4.6" fill="#262626" text-anchor="end">副主题</text>
<circle cx="675" cy="249.2" r="1" fill="#fff" stroke="#9ab8d8" stroke-width="0.4"/>
<rect x="628.4" y="180.60000000000002" width="38.0" height="14.399999999999977" rx="7.199999999999989" fill="#eaf2fb" stroke="#5b9bd5" stroke-width="0.8"/>
<text x="647.4" y="189.888" font-size="5.8" fill="#4a4a4a" text-anchor="middle">主要主题</text>
<rect x="628.4" y="214.10000000000002" width="38.0" height="14.399999999999977" rx="7.199999999999989" fill="#eaf2fb" stroke="#5b9bd5" stroke-width="0.8"/>
<text x="647.4" y="223.388" font-size="5.8" fill="#4a4a4a" text-anchor="middle">主要主题</text>
<rect x="628.4" y="242.0" width="38.0" height="14.399999999999977" rx="7.199999999999989" fill="#eaf2fb" stroke="#5b9bd5" stroke-width="0.8"/>
<text x="647.4" y="251.28799999999998" font-size="5.8" fill="#4a4a4a" text-anchor="middle">主要主题</text>
<path d="M547.6 128.6 H612.6 V141.4 H577 L592 157.6 L564.6 141.4 H547.6Z" fill="#f8cbb0" stroke="#3a78b8" stroke-width="0.7"/>
<text x="549.2" y="136.7" font-size="4.5" fill="#111">信息技术的学习要注重实践。</text>
<path d="M542 170.2 C546 158.4 562 155.4 590 158 C614 160.4 636 167 644.4 179" fill="none" stroke="#1b66ae" stroke-width="1.35" stroke-dasharray="5 1.6 1.2 1.6"/>
<path d="M641.4 176.4 L645.4 181.2 L646.8 175.4Z" fill="#1b66ae"/>
<path d="M692.6 255.4 C690 272 665 278 620 281 C570 283.6 515 283 495 269" fill="none" stroke="#1b66ae" stroke-width="1.35" stroke-dasharray="5 1.6 1.2 1.6"/>
<path d="M492.6 266.4 L498.6 268 L494.6 272.4Z" fill="#1b66ae"/>
<path d="M658 147.2 v5.4 l1.3 -1.2 l1 2.2 l0.9 -0.4 l-1 -2.2 h1.7z" fill="#fff" stroke="#2a2a2a" stroke-width="0.45"/>
<rect x="354.4" y="317.8" width="477.6" height="5" fill="#f0f0f0"/><rect x="537" y="318.4" width="111.4" height="3.8" fill="#c9c9c9"/>
<path d="M357.6 319 l-1.4 1.3 l1.4 1.3z" fill="#5a5a5a"/><path d="M828 319 l1.4 1.3 l-1.4 1.3z" fill="#5a5a5a"/>
<rect x="825.6" y="312.2" width="4" height="4" fill="#f4f4f4" stroke="#b0b0b0" stroke-width="0.5"/><path d="M832.6 314 l1 1.2 l1 -1.2" stroke="#3a3a3a" stroke-width="0.6" fill="none"/>
<rect x="354.4" y="322.8" width="484" height="8.6" fill="#e6e6e6"/>
<path d="M360 322.8 L364.6 331.4 H418 V322.8Z" fill="#fdfdfd"/>
<path d="M356.6 326 l-1.2 1.3 l1.2 1.3z" fill="#7a7a7a"/><path d="M834 326 l1.2 1.3 l-1.2 1.3z" fill="#9a9a9a"/>
<rect x="369" y="324.8" width="4.6" height="5.2" rx="0.6" fill="#2a50b0"/><rect x="370" y="326.6" width="2.6" height="2.2" fill="#dce4f8"/>
<text x="377.6" y="329" font-size="4.6" font-weight="bold" fill="#2a56b8">001.mmap*</text>
<path d="M406.2 326.2 l1.4 1.6 m0.4 -0.2 v0.8 h-0.8" stroke="#9a9a9a" stroke-width="0.4" fill="none"/><path d="M413 326 l1.6 1.8 m0 -1.8 l-1.6 1.8" stroke="#5a5a5a" stroke-width="0.5"/>
<rect x="354.4" y="331.4" width="494.2" height="9.2" fill="#f6f6f6"/>
<g fill="#5a5a5a"><path d="M683.2 333.4 h4 l-1.5 1.8 v2.4 h-1 v-2.4z"/><rect x="688.4" y="335.4" width="0.9" height="0.7"/><path d="M693.4 333.4 h4 l-1.5 1.8 v2.4 h-1 v-2.4z"/><rect x="698.6" y="335.4" width="0.9" height="0.7"/></g>
<g fill="none" stroke="#6a6a6a" stroke-width="0.5"><circle cx="707.6" cy="335.8" r="2"/><path d="M707.6 334.4 v1.6 h1"/><rect x="715.6" y="333.6" width="4.4" height="4.4"/><rect x="716.8" y="334.8" width="2" height="2"/><rect x="723.6" y="333.6" width="4" height="4.4"/><path d="M725 333.6 v4.4"/><rect x="731.8" y="333.6" width="4.6" height="4.4"/><path d="M731.8 335.2 h4.6 M731.8 336.6 h4.6"/><rect x="740" y="333.6" width="4.6" height="4.4"/><rect x="741" y="334.6" width="2" height="1.6" fill="#8a8a8a"/><rect x="748.4" y="333.6" width="4.6" height="4.4"/><path d="M749.4 336.8 l2.6 -2.4"/><rect x="756.8" y="333.6" width="4.6" height="4.4"/><path d="M756.8 335.8 h4.6 M759 333.6 v4.4"/></g>
<rect x="711.6" y="335.4" width="0.9" height="0.7" fill="#5a5a5a"/>
<text x="766.6" y="337.6" font-size="4.4" fill="#7a7a7a">100%</text><rect x="783.6" y="335.6" width="2" height="0.5" fill="#9a9a9a"/>
<rect x="790" y="331.4" width="58.6" height="9.2" fill="#fdfdfd"/>
<rect x="792" y="331" width="8.4" height="8.6" rx="1.6" fill="#2cb82c" transform="rotate(-8 796 335.4)"/><path d="M798.6 333.4 q-3.6 -1 -4 0.8 q0 1.2 2 1.4 q2 0.2 1.8 1.4 q-0.4 1.4 -4.2 0.4" fill="none" stroke="#fff" stroke-width="1.1"/>
<text x="802.6" y="337.6" font-size="6.4" fill="#2a2a3a">五</text>
<g fill="#2a2a4a"><path d="M815.4 333.4 q1.8 2.4 -1.6 4.2 q3.6 1 3.6 -2.6z"/><circle cx="819.6" cy="334.4" r="0.6"/><path d="M820.6 335.6 l1.4 1.6 h-1.4z"/><rect x="825.2" y="333.8" width="5.6" height="4" rx="0.6" fill="none" stroke="#2a2a4a" stroke-width="0.6"/><rect x="826.2" y="335" width="3.6" height="0.5"/><rect x="826.2" y="336.2" width="3.6" height="0.5"/><rect x="835" y="333.2" width="1.6" height="2.6" rx="0.8"/><path d="M833.6 336.4 h4.4 l-2.2 1.6z"/><rect x="840.6" y="333.6" width="1.6" height="1.6"/><rect x="843.2" y="333.6" width="1.6" height="1.6"/><rect x="840.6" y="336.2" width="1.6" height="1.6"/><rect x="843.2" y="336.2" width="1.6" height="1.6"/></g>
<defs><linearGradient id="tb" x1="0" x2="1" y1="0" y2="0"><stop offset="0" stop-color="#1f3c4a"/><stop offset="0.45" stop-color="#1e3848"/><stop offset="0.7" stop-color="#1d2e4a"/><stop offset="1" stop-color="#1b2648"/></linearGradient></defs>
<rect x="354.4" y="340.6" width="494.2" height="14.2" fill="url(#tb)"/>
<rect x="354.4" y="354.4" width="494.2" height="0.7" fill="#8a8a8a"/>
<g fill="#fff"><rect x="358.8" y="344.4" width="2.8" height="2.8"/><rect x="362" y="344.4" width="2.8" height="2.8"/><rect x="358.8" y="347.6" width="2.8" height="2.8"/><rect x="362" y="347.6" width="2.8" height="2.8"/></g>
<g fill="none" stroke="#fff" stroke-width="0.6"><rect x="376" y="345" width="3.2" height="4.6"/><path d="M375 345 v1 M375 348.6 v1 M380.6 345 v1.4 M380.6 348.2 v1.4"/></g>
<path d="M392 344 h3.4 l1 0.6 v6.4 l-1.6 -1 l-1.4 1 h-1.4z" fill="#f4cf5a"/><rect x="392" y="344" width="1.4" height="7" fill="#e8b83a"/>
<text x="401" y="349.4" font-size="4.3" fill="#e6ecf0">我的思维导图</text>
<rect x="389" y="353.2" width="52" height="1.2" fill="#5f8fc0"/>
<path d="M447 344 h3.4 l1 0.6 v6.4 l-1.6 -1 l-1.4 1 h-1.4z" fill="#f4cf5a"/><rect x="447" y="344" width="1.4" height="7" fill="#e8b83a"/>
<text x="456" y="349.4" font-size="4.3" fill="#e6ecf0">办公</text>
<rect x="444" y="353.2" width="52.39999999999998" height="1.2" fill="#5f8fc0"/>
<path d="M502 344 h3.4 l1 0.6 v6.4 l-1.6 -1 l-1.4 1 h-1.4z" fill="#f4cf5a"/><rect x="502" y="344" width="1.4" height="7" fill="#e8b83a"/>
<text x="511" y="349.4" font-size="4.3" fill="#e6ecf0">学习任务</text>
<rect x="499" y="353.2" width="52" height="1.2" fill="#5f8fc0"/>
<circle cx="561" cy="347.6" r="2.8" fill="none" stroke="#3aa0f0" stroke-width="1.2"/><path d="M557.4 346.6 q4 -4.4 7.6 -1.8" fill="none" stroke="#f0c83a" stroke-width="0.7"/><rect x="559" y="347.2" width="4" height="0.8" fill="#3aa0f0"/>
<circle cx="577.4" cy="347.6" r="3.2" fill="#e8402a"/><path d="M577.4 347.6 L574.4 349.4 A3.2 3.2 0 0 0 579.8 349.8Z" fill="#3aaa4a"/><path d="M577.4 347.6 L580.4 349.2 A3.2 3.2 0 0 0 579.6 345.2Z" fill="#f4c430"/><circle cx="577.4" cy="347.6" r="1.4" fill="#fff"/><circle cx="577.4" cy="347.6" r="1" fill="#3a80f0"/>
<ellipse cx="593.6" cy="348.2" rx="3" ry="2.4" fill="#c8d8e8"/><circle cx="592.4" cy="347.6" r="0.7" fill="#e04030"/><circle cx="594.4" cy="347.4" r="0.7" fill="#3a80e0"/><path d="M595 346.6 l2.4 -2.6 l0.8 0.8 l-2.6 2.4z" fill="#f0b040"/>
<rect x="606" y="343.4" width="7.6" height="7.6" rx="1.2" fill="#e8402e"/><path d="M611.6 345.4 h-3 v3.8 h3" fill="none" stroke="#fff" stroke-width="1.1"/>
<text x="616.6" y="349.4" font-size="4.3" fill="#e6ecf0">正在录制...</text><rect x="604" y="353.2" width="53" height="1.2" fill="#5f8fc0"/>
<rect x="659" y="340.6" width="54.6" height="14.2" fill="#3d5470"/><rect x="659" y="353.2" width="54.6" height="1.2" fill="#7aa8d8"/>
<rect x="662.4" y="343.6" width="7.2" height="7.2" rx="0.8" fill="#2a4aa8"/><path d="M664 349.4 v-4.4 l2 2.4 l2 -2.4 v4.4" fill="none" stroke="#fff" stroke-width="1"/>
<text x="672" y="349.4" font-size="4.5" fill="#e6ecf0">MindManager - 0...</text>
<rect x="735" y="345" width="4.4" height="4.6" rx="0.8" fill="#f0a030"/><rect x="736.4" y="346.4" width="1.6" height="1.6" fill="#fff"/>
<rect x="743" y="344.8" width="5" height="5" fill="#4ab84a"/><rect x="744.2" y="346" width="1.2" height="1.2" fill="#fff"/><rect x="746" y="347.6" width="1.2" height="1.2" fill="#fff"/>
<rect x="752.6" y="344.4" width="2.2" height="3.8" rx="1.1" fill="#e8ecf0"/><path d="M752 347.6 q1.7 2.6 3.4 0 M753.7 349 v1.4" stroke="#e8ecf0" stroke-width="0.5" fill="none"/>
<path d="M759.6 345 h4.4 v2.6 q-0.4 2 -2.2 2.8 q-1.8 -0.8 -2.2 -2.8z" fill="#4a6af0"/><path d="M760.8 346.4 h2 v1.4 l-1 1 l-1 -1z" fill="#c8d4ff"/>
<g fill="none" stroke="#e8ecf0" stroke-width="0.6"><rect x="768" y="345.2" width="4.6" height="3.4"/><path d="M767 348 v2 h2"/><path d="M776.6 346.6 h1 l1.6 -1.4 v4.8 l-1.6 -1.4 h-1z" fill="#e8ecf0"/><path d="M780.4 346.2 q1 1.4 0 2.8"/></g>
<text x="784" y="349.8" font-size="5" fill="#e8ecf0">中</text>
<rect x="792.6" y="344.8" width="5" height="5" rx="1" fill="#2cb82c" transform="rotate(-8 795 347)"/><path d="M796.4 346 q-2 -0.6 -2.2 0.4 q0 0.8 1.2 0.8 q1.2 0.2 1 0.8 q-0.2 0.8 -2.4 0.2" fill="none" stroke="#fff" stroke-width="0.6"/>
<text x="817.6" y="346.2" font-size="4.5" fill="#e8ecf0" text-anchor="middle">15:42</text>
<text x="817.6" y="352" font-size="4.5" fill="#e8ecf0" text-anchor="middle">2022-09-30</text>
<path d="M837 344.6 h6 v4 h-3.6 l-1 1.2 v-1.2 h-1.4z" fill="#f4f4f4"/><rect x="838" y="345.8" width="4" height="0.5" fill="#1b2648"/><rect x="838" y="347" width="4" height="0.5" fill="#1b2648"/><circle cx="843.4" cy="349.8" r="1.6" fill="#2a3450" stroke="#e8ecf0" stroke-width="0.4"/>
</svg>
<!-- CANVAS-END -->
<!-- TL-START -->
<!-- PLAYBAR + TIMELINE -->
<svg class="a" style="left:0;top:360px" width="1000" height="182" viewBox="0 360 1000 182" font-family="Liberation Sans, sans-serif">
<rect x="201" y="360.6" width="799" height="3" fill="#111315"/>
<rect x="0" y="363.4" width="1000" height="31.6" fill="#23272e"/>
<rect x="0" y="394.6" width="1000" height="0.9" fill="#30353c"/>
<rect x="0" y="395.5" width="1000" height="13.3" fill="#23272e"/>
<circle cx="349.3" cy="379.5" r="7.1" fill="#343a42"/>
<circle cx="369.9" cy="379.5" r="7.1" fill="#343a42"/>
<circle cx="393.5" cy="379.5" r="11" fill="#343a42"/>
<circle cx="417.2" cy="379.5" r="7.1" fill="#343a42"/>
<circle cx="437.1" cy="379.5" r="7.1" fill="#343a42"/>
<g fill="#e4e6e8"><path d="M345 379.5 l5.2 -3 v6z"/><rect x="351.4" y="376.5" width="1.4" height="6"/>
<rect x="365.8" y="376.5" width="1.4" height="6"/><path d="M368.4 376.5 l5.2 3 l-5.2 3z"/>
<path d="M389.4 373.4 l10.4 6.1 l-10.4 6.1z"/></g>
<path d="M418.8 376.4 l-3.2 3.1 l3.2 3.1" fill="none" stroke="#f0f0f0" stroke-width="1.3"/><path d="M435.6 376.4 l3.2 3.1 l-3.2 3.1" fill="none" stroke="#f0f0f0" stroke-width="1.3"/>
<rect x="457.2" y="378.4" width="110" height="2.2" rx="1.1" fill="#4c6466"/><rect x="567" y="378.4" width="77.4" height="2.2" rx="1.1" fill="#15171a"/><circle cx="567.2" cy="379.4" r="3.6" fill="#e2e6ea"/>
<rect x="652.2" y="373" width="65.3" height="12.8" rx="1" fill="#1a1d21"/><rect x="696" y="373" width="21.5" height="12.8" rx="1" fill="#22262b"/>
<text x="656" y="381.7" font-size="6.4" fill="#e4e4e4" letter-spacing="-0.15">05:48 / 09:45</text><text x="699.2" y="381.7" font-size="6.4" fill="#e4e4e4" letter-spacing="-0.15">30fps</text>
<rect x="950.8" y="372" width="40.4" height="14.7" rx="1.5" fill="#343b42"/>
<path d="M966.40 378.51 L967.54 378.58 L967.54 380.02 L966.40 380.09 L966.02 381.01 L966.78 381.86 L965.76 382.88 L964.91 382.12 L963.99 382.50 L963.92 383.64 L962.48 383.64 L962.41 382.50 L961.49 382.12 L960.64 382.88 L959.62 381.86 L960.38 381.01 L960.00 380.09 L958.86 380.02 L958.86 378.58 L960.00 378.51 L960.38 377.59 L959.62 376.74 L960.64 375.72 L961.49 376.48 L962.41 376.10 L962.48 374.96 L963.92 374.96 L963.99 376.10 L964.91 376.48 L965.76 375.72 L966.78 376.74 L966.02 377.59 Z" fill="#8cb820"/><circle cx="963.2" cy="379.3" r="1.5" fill="#343b42"/>
<text x="970.4" y="380.2" font-size="6.4" fill="#8cb820">属性</text>
<rect x="0" y="396.2" width="13.6" height="12" fill="#272b32"/>
<rect x="14.4" y="396.2" width="13.200000000000001" height="12" fill="#272b32"/>
<rect x="28.4" y="396.2" width="13.200000000000003" height="12" fill="#272b32"/>
<rect x="43" y="396.2" width="13" height="12" fill="#272b32"/>
<rect x="57" y="396.2" width="13" height="12" fill="#272b32"/>
<rect x="71" y="396.2" width="13.400000000000006" height="12" fill="#272b32"/>
<g fill="none" stroke="#9aa0a6" stroke-width="0.9"><path d="M4.4 400 h3 q2.6 0 2.6 2.6 q0 2.2 -1.8 2.8"/><path d="M6.2 398 l-2 2 l2 2"/><path d="M23.8 400 h-3 q-2.6 0 -2.6 2.6 q0 2.2 1.8 2.8"/><path d="M22 398 l2 2 l-2 2"/>
<path d="M32.6 397.8 l4.4 6.2 M37.6 397.8 l-4.4 6.2" stroke-width="0.8"/><circle cx="32.8" cy="405" r="1.1" stroke-width="0.6"/><circle cx="37.4" cy="405" r="1.1" stroke-width="0.6"/></g>
<g fill="#9aa0a6"><rect x="46.4" y="398.6" width="6.4" height="7" rx="0.6" fill="none" stroke="#9aa0a6" stroke-width="0.7"/><rect x="47.8" y="400.6" width="4.4" height="4.6"/>
<path d="M60 400.4 h2.2 v5 h-2.2z M61 399 l1.4 -1.4 l1.4 1.4 M62.4 397.8 v2" fill="none" stroke="#9aa0a6" stroke-width="0.7"/><rect x="63.4" y="401.4" width="3.6" height="4" rx="0.4"/><rect x="64.6" y="402.6" width="1.2" height="1.6" fill="#272b32"/>
<rect x="77.3" y="397.6" width="0.8" height="8.6"/><path d="M75.8 399 h-1.8 v5.8 h1.8z M79.6 399 h1.8 v5.8 h-1.8z" opacity=".85"/></g>
<circle cx="102.6" cy="401" r="2" fill="none" stroke="#f2f2f2" stroke-width="1"/><path d="M104.2 402.6 l2.2 2.2" stroke="#f2f2f2" stroke-width="1.2"/>
<rect x="117.4" y="401.2" width="5" height="1" fill="#f2f2f2"/>
<rect x="129" y="401" width="18" height="1.6" rx="0.8" fill="#4c6466"/><rect x="147" y="401" width="33" height="1.6" rx="0.8" fill="#15171a"/><circle cx="147.2" cy="401.8" r="3" fill="#e2e6ea"/>
<path d="M188.4 399.2 v5.2 M185.8 401.8 h5.2" stroke="#f2f2f2" stroke-width="0.9"/>
<rect x="0" y="408.8" width="1000" height="133.2" fill="#191d20"/>
<rect x="42.2" y="408.8" width="957.8" height="6.6" fill="#16191c"/>
<rect x="42.2" y="415.4" width="957.8" height="15.8" fill="#22262c"/>
<rect x="0" y="408.8" width="42.2" height="22.4" fill="#23272e"/>
<rect x="0" y="431.2" width="42.2" height="110.8" fill="#2b3038"/>
<rect x="41.6" y="408.8" width="0.8" height="133.2" fill="#1d2024"/>
<rect x="22" y="410.8" width="17.4" height="8" rx="0.6" fill="#1f2328"/><rect x="22" y="420.8" width="17.4" height="8.2" rx="0.6" fill="#1f2328"/>
<path d="M30.6 412.4 v4.8 M28.2 414.8 h4.8" stroke="#f4f4f4" stroke-width="0.9"/><path d="M28.4 423.8 l2.2 2.2 l2.2 -2.2" fill="none" stroke="#f4f4f4" stroke-width="1"/>
<rect x="5.2" y="411.6" width="2.4" height="16.6" rx="0.6" fill="#121417"/><circle cx="6.4" cy="426.6" r="1.6" fill="#f4f4f4"/>
<circle cx="13" cy="415.6" r="0.7" fill="#4a6468"/><circle cx="13" cy="425" r="0.7" fill="#4a6468"/><circle cx="12.8" cy="419.8" r="1.1" fill="none" stroke="#4a6468" stroke-width="0.5"/><path d="M13.6 420.8 l1 1.2" stroke="#4a6468" stroke-width="0.6"/>
<rect x="42.25" y="416" width="0.7" height="7.6" fill="#4e555c"/>
<rect x="57.84" y="416" width="0.7" height="3.8" fill="#4e555c"/>
<rect x="73.43" y="416" width="0.7" height="3.8" fill="#4e555c"/>
<rect x="89.03" y="416" width="0.7" height="6.6" fill="#4e555c"/>
<rect x="104.62" y="416" width="0.7" height="3.8" fill="#4e555c"/>
<rect x="120.21" y="416" width="0.7" height="3.8" fill="#4e555c"/>
<rect x="135.80" y="416" width="0.7" height="7.6" fill="#4e555c"/>
<rect x="151.39" y="416" width="0.7" height="3.8" fill="#4e555c"/>
<rect x="166.98" y="416" width="0.7" height="3.8" fill="#4e555c"/>
<rect x="182.57" y="416" width="0.7" height="6.6" fill="#4e555c"/>
<rect x="198.17" y="416" width="0.7" height="3.8" fill="#4e555c"/>
<rect x="213.76" y="416" width="0.7" height="3.8" fill="#4e555c"/>
<rect x="229.35" y="416" width="0.7" height="7.6" fill="#4e555c"/>
<rect x="244.94" y="416" width="0.7" height="3.8" fill="#4e555c"/>
<rect x="260.53" y="416" width="0.7" height="3.8" fill="#4e555c"/>
<rect x="276.12" y="416" width="0.7" height="6.6" fill="#4e555c"/>
<rect x="291.72" y="416" width="0.7" height="3.8" fill="#4e555c"/>
<rect x="307.31" y="416" width="0.7" height="3.8" fill="#4e555c"/>
<rect x="322.90" y="416" width="0.7" height="7.6" fill="#4e555c"/>
<rect x="338.49" y="416" width="0.7" height="3.8" fill="#4e555c"/>
<rect x="354.08" y="416" width="0.7" height="3.8" fill="#4e555c"/>
<rect x="369.68" y="416" width="0.7" height="6.6" fill="#4e555c"/>
<rect x="385.27" y="416" width="0.7" height="3.8" fill="#4e555c"/>
<rect x="400.86" y="416" width="0.7" height="3.8" fill="#4e555c"/>
<rect x="416.45" y="416" width="0.7" height="7.6" fill="#4e555c"/>
<rect x="432.04" y="416" width="0.7" height="3.8" fill="#4e555c"/>
<rect x="447.63" y="416" width="0.7" height="3.8" fill="#4e555c"/>
<rect x="463.22" y="416" width="0.7" height="6.6" fill="#4e555c"/>
<rect x="478.82" y="416" width="0.7" height="3.8" fill="#4e555c"/>
<rect x="494.41" y="416" width="0.7" height="3.8" fill="#4e555c"/>
<rect x="510.00" y="416" width="0.7" height="7.6" fill="#4e555c"/>
<rect x="525.59" y="416" width="0.7" height="3.8" fill="#4e555c"/>
<rect x="541.18" y="416" width="0.7" height="3.8" fill="#4e555c"/>
<rect x="556.77" y="416" width="0.7" height="6.6" fill="#4e555c"/>
<rect x="572.37" y="416" width="0.7" height="3.8" fill="#4e555c"/>
<rect x="587.96" y="416" width="0.7" height="3.8" fill="#4e555c"/>
<rect x="603.55" y="416" width="0.7" height="7.6" fill="#4e555c"/>
<rect x="619.14" y="416" width="0.7" height="3.8" fill="#4e555c"/>
<rect x="634.73" y="416" width="0.7" height="3.8" fill="#4e555c"/>
<rect x="650.32" y="416" width="0.7" height="6.6" fill="#4e555c"/>
<rect x="665.92" y="416" width="0.7" height="3.8" fill="#4e555c"/>
<rect x="681.51" y="416" width="0.7" height="3.8" fill="#4e555c"/>
<rect x="697.10" y="416" width="0.7" height="7.6" fill="#4e555c"/>
<rect x="712.69" y="416" width="0.7" height="3.8" fill="#4e555c"/>
<rect x="728.28" y="416" width="0.7" height="3.8" fill="#4e555c"/>
<rect x="743.88" y="416" width="0.7" height="6.6" fill="#4e555c"/>
<rect x="759.47" y="416" width="0.7" height="3.8" fill="#4e555c"/>
<rect x="775.06" y="416" width="0.7" height="3.8" fill="#4e555c"/>
<rect x="790.65" y="416" width="0.7" height="7.6" fill="#4e555c"/>
<rect x="806.24" y="416" width="0.7" height="3.8" fill="#4e555c"/>
<rect x="821.83" y="416" width="0.7" height="3.8" fill="#4e555c"/>
<rect x="837.43" y="416" width="0.7" height="6.6" fill="#4e555c"/>
<rect x="853.02" y="416" width="0.7" height="3.8" fill="#4e555c"/>
<rect x="868.61" y="416" width="0.7" height="3.8" fill="#4e555c"/>
<rect x="884.20" y="416" width="0.7" height="7.6" fill="#4e555c"/>
<rect x="899.79" y="416" width="0.7" height="3.8" fill="#4e555c"/>
<rect x="915.38" y="416" width="0.7" height="3.8" fill="#4e555c"/>
<rect x="930.97" y="416" width="0.7" height="6.6" fill="#4e555c"/>
<rect x="946.57" y="416" width="0.7" height="3.8" fill="#4e555c"/>
<rect x="962.16" y="416" width="0.7" height="3.8" fill="#4e555c"/>
<rect x="977.75" y="416" width="0.7" height="7.6" fill="#4e555c"/>
<rect x="993.34" y="416" width="0.7" height="3.8" fill="#4e555c"/>
<text x="42.2" y="430" font-size="6" fill="#ffffff" letter-spacing="-0.12">0:00:00;00</text>
<text x="135.8" y="430" font-size="6" fill="#ffffff" letter-spacing="-0.12">0:01:00;00</text>
<text x="229.3" y="430" font-size="6" fill="#ffffff" letter-spacing="-0.12">0:02:00;00</text>
<text x="322.9" y="430" font-size="6" fill="#ffffff" letter-spacing="-0.12">0:03:00;00</text>
<text x="416.4" y="430" font-size="6" fill="#ffffff" letter-spacing="-0.12">0:04:00;00</text>
<text x="510.0" y="430" font-size="6" fill="#ffffff" letter-spacing="-0.12">0:05:00;00</text>
<text x="603.5" y="430" font-size="6" fill="#ffffff" letter-spacing="-0.12">0:06:00;00</text>
<text x="697.1" y="430" font-size="6" fill="#ffffff" letter-spacing="-0.12">0:07:00;00</text>
<text x="790.6" y="430" font-size="6" fill="#ffffff" letter-spacing="-0.12">0:08:00;00</text>
<text x="884.1" y="430" font-size="6" fill="#ffffff" letter-spacing="-0.12">0:09:00;00</text>
<text x="977.7" y="430" font-size="6" fill="#ffffff" letter-spacing="-0.12">0:10:00;00</text>
<rect x="42.4" y="445.2" width="957.6" height="0.7" fill="#22262b"/>
<rect x="0" y="445.8" width="41.6" height="28.399999999999977" fill="#363c44"/>
<rect x="42.4" y="474.2" width="957.6" height="0.7" fill="#22262b"/>
<text x="9" y="461.8" font-size="6.4" fill="#e8e8e8">轨道 3</text>
<ellipse cx="35.6" cy="455.4" rx="2.4" ry="1.4" fill="none" stroke="#596068" stroke-width="0.7"/><circle cx="35.6" cy="455.4" r="0.7" fill="#596068"/>
<rect x="33.8" y="463.0" width="3.4" height="2.8" fill="none" stroke="#596068" stroke-width="0.7"/><path d="M34.6 463.0 v-1 q0 -1 1 -1 q1 0 1 0.6" fill="none" stroke="#596068" stroke-width="0.6"/>
<rect x="0" y="474.9" width="41.6" height="28.5" fill="#363c44"/>
<rect x="42.4" y="503.4" width="957.6" height="0.7" fill="#22262b"/>
<text x="9" y="490.95" font-size="6.4" fill="#e8e8e8">轨道 2</text>
<ellipse cx="35.6" cy="484.54999999999995" rx="2.4" ry="1.4" fill="none" stroke="#596068" stroke-width="0.7"/><circle cx="35.6" cy="484.54999999999995" r="0.7" fill="#596068"/>
<rect x="33.8" y="492.15" width="3.4" height="2.8" fill="none" stroke="#596068" stroke-width="0.7"/><path d="M34.6 492.15 v-1 q0 -1 1 -1 q1 0 1 0.6" fill="none" stroke="#596068" stroke-width="0.6"/>
<rect x="0" y="504" width="41.6" height="28.600000000000023" fill="#363c44"/>
<rect x="42.4" y="532.6" width="957.6" height="0.7" fill="#22262b"/>
<text x="10.5" y="520.0999999999999" font-size="6.4" fill="#e8e8e8">轨道 1</text>
<ellipse cx="35.6" cy="513.6999999999999" rx="2.4" ry="1.4" fill="none" stroke="#596068" stroke-width="0.7"/><circle cx="35.6" cy="513.6999999999999" r="0.7" fill="#596068"/>
<rect x="33.8" y="521.3" width="3.4" height="2.8" fill="none" stroke="#596068" stroke-width="0.7"/><path d="M34.6 521.3 v-1 q0 -1 1 -1 q1 0 1 0.6" fill="none" stroke="#596068" stroke-width="0.6"/>
<rect x="43" y="446.2" width="8" height="27.6" rx="1.6" fill="#3a424a"/><rect x="45.6" y="446.2" width="4.8" height="27.4" rx="1.2" fill="#159a88"/><rect x="46.2" y="451" width="3.6" height="18" fill="#55c4a4"/><rect x="46.2" y="458" width="3.6" height="4" fill="#8ad8c0"/>
<rect x="49.4" y="475.2" width="905.6" height="27.8" rx="2" fill="#38404a"/>
<rect x="49.4" y="475.2" width="905.6" height="0.8" rx="0.4" fill="#424a53"/>
<rect x="49.4" y="504.2" width="905.6" height="27.8" rx="2" fill="#38404a"/>
<path d="M50.2 502.5 L50.7 488.4 L54.1 488.4 L54.6 502.5Z M54.9 502.5 L55.4 488.4 L55.8 488.4 L56.3 502.5Z M57.3 502.5 L57.8 488.4 L58.6 488.4 L59.1 502.5Z M58.9 502.5 L59.4 488.4 L61.2 488.4 L61.7 502.5Z M61.5 502.5 L62.0 488.4 L66.5 488.4 L67.0 502.5Z M66.8 502.5 L67.3 488.4 L69.1 488.4 L69.6 502.5Z M70.6 502.5 L71.1 488.4 L75.5 488.4 L76.0 502.5Z M75.8 502.5 L76.3 490.8 L78.2 490.8 L78.7 502.5Z M78.4 502.5 L78.9 488.4 L83.3 488.4 L83.8 502.5Z M83.7 502.5 L84.2 488.8 L84.6 488.8 L85.1 502.5Z M85.0 502.5 L85.5 488.4 L88.1 488.4 L88.6 502.5Z M88.5 502.5 L89.0 489.6 L89.8 489.6 L90.3 502.5Z M90.3 502.5 L90.8 488.4 L92.0 488.4 L92.5 502.5Z M92.4 502.5 L92.9 488.4 L96.3 488.4 L96.8 502.5Z M97.8 502.5 L98.3 489.6 L99.1 489.6 L99.6 502.5Z M99.4 502.5 L99.9 488.6 L101.7 488.6 L102.2 502.5Z M103.2 502.5 L103.7 488.4 L108.1 488.4 L108.6 502.5Z M109.2 502.5 L109.7 488.4 L115.1 488.4 L115.6 502.5Z M115.6 502.5 L116.1 488.4 L117.9 488.4 L118.4 502.5Z M118.3 502.5 L118.8 489.6 L119.6 489.6 L120.1 502.5Z M120.1 502.5 L120.6 488.4 L126.0 488.4 L126.5 502.5Z M127.1 502.5 L127.6 489.6 L130.2 489.6 L130.7 502.5Z M130.6 502.5 L131.1 488.8 L131.9 488.8 L132.4 502.5Z M132.7 502.5 L133.2 488.4 L134.4 488.4 L134.9 502.5Z M134.8 502.5 L135.3 488.4 L140.7 488.4 L141.2 502.5Z M141.0 502.5 L141.5 488.8 L142.3 488.8 L142.8 502.5Z M142.9 502.5 L143.4 488.4 L146.8 488.4 L147.3 502.5Z M147.9 502.5 L148.4 488.4 L153.8 488.4 L154.3 502.5Z M154.1 502.5 L154.6 488.6 L157.2 488.6 L157.7 502.5Z M157.6 502.5 L158.1 488.4 L158.5 488.4 L159.0 502.5Z M159.6 502.5 L160.1 488.4 L162.7 488.4 L163.2 502.5Z M163.3 502.5 L163.8 488.6 L164.2 488.6 L164.7 502.5Z M164.8 502.5 L165.3 489.6 L166.5 489.6 L167.0 502.5Z M166.8 502.5 L167.3 488.4 L172.7 488.4 L173.2 502.5Z M173.1 502.5 L173.6 488.4 L176.2 488.4 L176.7 502.5Z M176.6 502.5 L177.1 488.4 L181.5 488.4 L182.0 502.5Z M182.6 502.5 L183.1 488.4 L183.9 488.4 L184.4 502.5Z M196.6 502.5 L197.1 488.8 L201.5 488.8 L202.0 502.5Z M202.0 502.5 L202.5 488.4 L203.7 488.4 L204.2 502.5Z M205.2 502.5 L205.7 488.4 L208.3 488.4 L208.8 502.5Z M208.9 502.5 L209.4 488.4 L213.8 488.4 L214.3 502.5Z M214.2 502.5 L214.7 488.4 L215.5 488.4 L216.0 502.5Z M215.9 502.5 L216.4 490.8 L218.2 490.8 L218.7 502.5Z M218.6 502.5 L219.1 488.6 L219.5 488.6 L220.0 502.5Z M219.9 502.5 L220.4 488.4 L223.0 488.4 L223.5 502.5Z M223.3 502.5 L223.8 488.4 L225.0 488.4 L225.5 502.5Z M226.5 502.5 L227.0 489.6 L230.4 489.6 L230.9 502.5Z M231.0 502.5 L231.5 488.8 L232.7 488.8 L233.2 502.5Z M233.0 502.5 L233.5 490.8 L238.9 490.8 L239.4 502.5Z M240.4 502.5 L240.9 488.4 L245.3 488.4 L245.8 502.5Z M246.1 502.5 L246.6 488.4 L251.0 488.4 L251.5 502.5Z M252.1 502.5 L252.6 488.4 L257.0 488.4 L257.5 502.5Z M257.4 502.5 L257.9 488.4 L258.7 488.4 L259.2 502.5Z M259.8 502.5 L260.3 488.4 L261.5 488.4 L262.0 502.5Z M262.1 502.5 L262.6 488.4 L263.0 488.4 L263.5 502.5Z M263.3 502.5 L263.8 488.8 L265.0 488.8 L265.5 502.5Z M265.3 502.5 L265.8 489.6 L269.2 489.6 L269.7 502.5Z M269.5 502.5 L270.0 488.4 L270.8 488.4 L271.3 502.5Z M271.6 502.5 L272.1 490.8 L273.3 490.8 L273.8 502.5Z M273.8 502.5 L274.3 489.6 L277.7 489.6 L278.2 502.5Z M278.3 502.5 L278.8 488.4 L284.2 488.4 L284.7 502.5Z M284.6 502.5 L285.1 488.6 L290.5 488.6 L291.0 502.5Z M291.6 502.5 L292.1 488.4 L297.5 488.4 L298.0 502.5Z M297.8 502.5 L298.3 488.4 L299.5 488.4 L300.0 502.5Z M300.1 502.5 L300.6 488.6 L303.2 488.6 L303.7 502.5Z M303.6 502.5 L304.1 488.4 L304.5 488.4 L305.0 502.5Z M306.0 502.5 L306.5 488.4 L309.9 488.4 L310.4 502.5Z M311.4 502.5 L311.9 488.8 L312.3 488.8 L312.8 502.5Z M312.8 502.5 L313.3 488.4 L314.1 488.4 L314.6 502.5Z M315.6 502.5 L316.1 488.4 L319.5 488.4 L320.0 502.5Z M320.1 502.5 L320.6 488.8 L322.4 488.8 L322.9 502.5Z M323.9 502.5 L324.4 490.8 L327.8 490.8 L328.3 502.5Z M328.2 502.5 L328.7 488.4 L330.5 488.4 L331.0 502.5Z M331.3 502.5 L331.8 488.4 L333.6 488.4 L334.1 502.5Z M335.1 502.5 L335.6 488.4 L341.0 488.4 L341.5 502.5Z M341.3 502.5 L341.8 488.4 L342.2 488.4 L342.7 502.5Z M343.3 502.5 L343.8 488.4 L346.4 488.4 L346.9 502.5Z M355.2 502.5 L355.7 488.4 L357.1 488.4 L357.6 502.5Z M383.3 502.5 L383.8 488.4 L384.6 488.4 L385.1 502.5Z M384.9 502.5 L385.4 488.6 L387.2 488.6 L387.7 502.5Z M387.6 502.5 L388.1 488.4 L391.5 488.4 L392.0 502.5Z M392.6 502.5 L393.1 488.6 L393.5 488.6 L394.0 502.5Z M394.1 502.5 L394.6 490.8 L395.4 490.8 L395.9 502.5Z M395.8 502.5 L396.3 488.4 L400.7 488.4 L401.2 502.5Z M401.8 502.5 L402.3 488.4 L403.5 488.4 L404.0 502.5Z M404.1 502.5 L404.6 488.4 L405.4 488.4 L405.9 502.5Z M411.8 502.5 L412.3 488.4 L416.7 488.4 L417.2 502.5Z M422.3 502.5 L422.8 488.4 L424.0 488.4 L424.5 502.5Z M424.3 502.5 L424.8 489.6 L426.0 489.6 L426.5 502.5Z M427.1 502.5 L427.6 489.6 L428.8 489.6 L429.3 502.5Z M429.9 502.5 L430.4 488.4 L433.8 488.4 L434.3 502.5Z M435.3 502.5 L435.8 488.4 L437.0 488.4 L437.5 502.5Z M437.3 502.5 L437.8 488.8 L438.6 488.8 L439.1 502.5Z M439.0 502.5 L439.5 488.4 L443.9 488.4 L444.4 502.5Z M444.3 502.5 L444.8 488.4 L445.2 488.4 L445.7 502.5Z M445.6 502.5 L446.1 488.8 L448.7 488.8 L449.2 502.5Z M449.1 502.5 L449.6 488.4 L453.0 488.4 L453.5 502.5Z M454.5 502.5 L455.0 488.4 L459.4 488.4 L459.9 502.5Z M459.7 502.5 L460.2 488.6 L463.6 488.6 L464.1 502.5Z M465.1 502.5 L465.6 488.8 L470.0 488.8 L470.5 502.5Z M470.4 502.5 L470.9 488.8 L472.1 488.8 L472.6 502.5Z M473.6 502.5 L474.1 488.6 L474.5 488.6 L475.0 502.5Z M474.9 502.5 L475.4 488.4 L475.8 488.4 L476.3 502.5Z M476.2 502.5 L476.7 488.6 L477.9 488.6 L478.4 502.5Z M478.2 502.5 L478.8 488.4 L479.1 488.4 L479.6 502.5Z M480.6 502.5 L481.1 488.4 L486.5 488.4 L487.0 502.5Z M488.0 502.5 L488.5 488.4 L488.9 488.4 L489.4 502.5Z M489.3 502.5 L489.8 488.4 L492.4 488.4 L492.9 502.5Z M492.8 502.5 L493.3 488.8 L498.7 488.8 L499.2 502.5Z M499.0 502.5 L499.5 488.6 L500.3 488.6 L500.8 502.5Z M500.9 502.5 L501.4 488.4 L503.2 488.4 L503.7 502.5Z M504.3 502.5 L504.8 488.8 L510.2 488.8 L510.7 502.5Z M510.6 502.5 L511.1 488.8 L513.7 488.8 L514.2 502.5Z M514.1 502.5 L514.6 488.4 L520.0 488.4 L520.5 502.5Z M520.8 502.5 L521.3 488.4 L521.6 488.4 L522.1 502.5Z M558.8 502.5 L559.3 488.4 L562.7 488.4 L563.2 502.5Z M563.1 502.5 L563.6 488.4 L568.0 488.4 L568.5 502.5Z M568.4 502.5 L568.9 488.4 L571.5 488.4 L572.0 502.5Z M571.9 502.5 L572.4 488.4 L575.8 488.4 L576.3 502.5Z M576.3 502.5 L576.8 488.6 L578.0 488.6 L578.5 502.5Z M578.4 502.5 L578.9 488.4 L579.7 488.4 L580.2 502.5Z M580.8 502.5 L581.3 490.8 L582.5 490.8 L583.0 502.5Z M582.9 502.5 L583.4 488.4 L584.6 488.4 L585.1 502.5Z M586.1 502.5 L586.6 488.4 L591.0 488.4 L591.5 502.5Z M591.8 502.5 L592.3 488.4 L594.1 488.4 L594.6 502.5Z M594.7 502.5 L595.2 488.4 L596.0 488.4 L596.5 502.5Z M596.3 502.5 L596.8 488.8 L600.2 488.8 L600.7 502.5Z M601.3 502.5 L601.8 488.4 L607.2 488.4 L607.7 502.5Z M608.0 502.5 L608.5 488.8 L611.9 488.8 L612.4 502.5Z M612.4 502.5 L612.9 488.4 L613.7 488.4 L614.2 502.5Z M614.1 502.5 L614.6 488.4 L615.4 488.4 L615.9 502.5Z M615.9 502.5 L616.4 488.4 L619.0 488.4 L619.5 502.5Z M619.4 502.5 L619.9 488.4 L622.5 488.4 L623.0 502.5Z M623.3 502.5 L623.8 488.4 L626.4 488.4 L626.9 502.5Z M626.8 502.5 L627.3 488.4 L632.7 488.4 L633.2 502.5Z M633.0 502.5 L633.5 488.4 L636.2 488.4 L636.7 502.5Z M636.5 502.5 L637.0 488.4 L639.7 488.4 L640.2 502.5Z M649.8 502.5 L650.3 490.8 L650.7 490.8 L651.2 502.5Z M651.0 502.5 L651.5 488.4 L654.2 488.4 L654.7 502.5Z M654.5 502.5 L655.0 488.4 L655.4 488.4 L655.9 502.5Z M662.5 502.5 L663.0 488.4 L668.4 488.4 L668.9 502.5Z M669.0 502.5 L669.5 488.4 L669.7 488.4 L670.2 502.5Z M678.5 502.5 L679.0 488.8 L679.4 488.8 L679.9 502.5Z M679.8 502.5 L680.3 488.4 L681.1 488.4 L681.6 502.5Z M681.6 502.5 L682.1 488.4 L682.5 488.4 L683.0 502.5Z M682.9 502.5 L683.4 490.8 L686.0 490.8 L686.5 502.5Z M686.5 502.5 L687.0 488.4 L688.8 488.4 L689.3 502.5Z M689.9 502.5 L690.4 488.4 L691.6 488.4 L692.1 502.5Z M692.2 502.5 L692.7 488.4 L693.1 488.4 L693.6 502.5Z M693.4 502.5 L693.9 488.4 L694.3 488.4 L694.8 502.5Z M695.8 502.5 L696.3 488.8 L698.1 488.8 L698.6 502.5Z M699.2 502.5 L699.7 488.6 L701.5 488.6 L702.0 502.5Z M701.8 502.5 L702.3 490.8 L706.7 490.8 L707.2 502.5Z M707.8 502.5 L708.3 488.8 L712.7 488.8 L713.2 502.5Z M713.2 502.5 L713.7 488.4 L715.5 488.4 L716.0 502.5Z M716.1 502.5 L716.6 490.8 L718.4 490.8 L718.9 502.5Z M718.8 502.5 L719.3 488.4 L723.7 488.4 L724.2 502.5Z M724.0 502.5 L724.5 488.4 L725.7 488.4 L726.2 502.5Z M726.1 502.5 L726.6 488.4 L729.2 488.4 L729.7 502.5Z M729.6 502.5 L730.1 488.4 L730.5 488.4 L731.0 502.5Z M731.3 502.5 L731.8 489.6 L734.4 489.6 L734.9 502.5Z M734.8 502.5 L735.3 488.4 L737.9 488.4 L738.4 502.5Z M739.0 502.5 L739.5 488.4 L740.7 488.4 L741.2 502.5Z M741.2 502.5 L741.7 488.4 L747.1 488.4 L747.6 502.5Z M747.6 502.5 L748.1 488.4 L751.5 488.4 L752.0 502.5Z M753.0 502.5 L753.5 488.4 L756.9 488.4 L757.4 502.5Z M757.2 502.5 L757.7 488.4 L760.3 488.4 L760.8 502.5Z M760.9 502.5 L761.4 488.4 L762.3 488.4 L762.8 502.5Z M766.6 502.5 L767.1 488.4 L771.5 488.4 L772.0 502.5Z M772.6 502.5 L773.1 488.8 L775.7 488.8 L776.2 502.5Z M776.1 502.5 L776.6 488.8 L778.4 488.8 L778.9 502.5Z M778.7 502.5 L779.2 488.4 L780.0 488.4 L780.5 502.5Z M780.3 502.5 L780.8 488.4 L782.0 488.4 L782.5 502.5Z M782.3 502.5 L782.8 488.4 L785.7 488.4 L786.2 502.5Z M795.3 502.5 L795.8 490.8 L798.4 490.8 L798.9 502.5Z M798.8 502.5 L799.3 489.6 L800.1 489.6 L800.6 502.5Z M801.6 502.5 L802.1 490.8 L803.0 490.8 L803.5 502.5Z M817.8 502.5 L818.3 488.6 L821.2 488.6 L821.7 502.5Z M828.4 502.5 L828.9 489.6 L831.5 489.6 L832.0 502.5Z M831.9 502.5 L832.4 488.8 L832.8 488.8 L833.3 502.5Z M833.6 502.5 L834.1 488.8 L835.3 488.8 L835.8 502.5Z M836.8 502.5 L837.3 490.8 L837.7 490.8 L838.2 502.5Z M838.1 502.5 L838.6 488.4 L839.4 488.4 L839.9 502.5Z M839.7 502.5 L840.2 490.8 L841.4 490.8 L841.9 502.5Z M842.0 502.5 L842.5 488.4 L843.3 488.4 L843.8 502.5Z M844.4 502.5 L844.9 490.8 L845.3 490.8 L845.8 502.5Z M845.6 502.5 L846.1 488.6 L846.5 488.6 L847.0 502.5Z M858.7 502.5 L859.2 488.6 L859.6 488.6 L860.1 502.5Z M859.9 502.5 L860.4 490.8 L861.2 490.8 L861.8 502.5Z M862.7 502.5 L863.2 488.6 L864.0 488.6 L864.5 502.5Z M864.5 502.5 L865.0 488.4 L865.8 488.4 L866.3 502.5Z M866.2 502.5 L866.7 488.4 L868.5 488.4 L869.0 502.5Z M869.6 502.5 L870.1 488.4 L873.2 488.4 L873.7 502.5Z M879.4 502.5 L879.9 490.8 L885.3 490.8 L885.8 502.5Z M885.8 502.5 L886.3 489.6 L886.7 489.6 L887.2 502.5Z M887.1 502.5 L887.6 489.6 L888.4 489.6 L888.9 502.5Z M888.8 502.5 L889.3 488.4 L892.7 488.4 L893.2 502.5Z M893.2 502.5 L893.7 488.4 L894.9 488.4 L895.4 502.5Z M896.0 502.5 L896.5 488.6 L896.9 488.6 L897.4 502.5Z M897.4 502.5 L897.9 488.4 L898.7 488.4 L899.2 502.5Z M899.8 502.5 L900.3 488.8 L902.9 488.8 L903.4 502.5Z M903.4 502.5 L903.9 488.6 L909.3 488.6 L909.8 502.5Z M910.4 502.5 L910.9 488.8 L911.7 488.8 L912.2 502.5Z M912.1 502.5 L912.6 488.4 L915.2 488.4 L915.7 502.5Z M916.3 502.5 L916.8 488.4 L917.2 488.4 L917.7 502.5Z M918.3 502.5 L918.8 488.8 L919.6 488.8 L920.1 502.5Z M923.3 502.5 L923.8 488.4 L926.4 488.4 L926.9 502.5Z M926.8 502.5 L927.3 488.4 L929.1 488.4 L929.6 502.5Z M929.4 502.5 L929.9 488.8 L931.1 488.8 L931.6 502.5Z M931.6 502.5 L932.1 488.4 L935.6 488.4 L936.1 502.5Z M937.0 502.5 L937.5 488.4 L940.2 488.4 L940.7 502.5Z M940.8 502.5 L941.2 488.6 L943.1 488.6 L943.6 502.5Z M944.1 502.5 L944.6 488.4 L949.1 488.4 L949.6 502.5Z M949.4 502.5 L949.9 488.6 L950.4 488.6 L950.9 502.5Z M951.4 502.5 L951.9 488.4 L953.7 488.4 L954.2 502.5Z " fill="#5a7076"/>
<text x="58" y="491.2" font-size="7.8" font-weight="bold" fill="#f4f4f4" letter-spacing="-0.1">Rec 09-30-22 (音频)</text>
<text x="96.6" y="520.8" font-size="7.8" font-weight="bold" fill="#f4f4f4" letter-spacing="-0.1">Rec 09-30-22 (屏幕)</text>
<rect x="54.2" y="506.8" width="38" height="23" fill="#24272b"/><rect x="57.4" y="507.4" width="31.4" height="21.6" fill="#f8edca"/>
<g fill="none" stroke="#e8a8a0" stroke-width="0.5"><rect x="59" y="509" width="7" height="4"/><rect x="59.4" y="516" width="6" height="5"/><rect x="60" y="523" width="8" height="4"/><rect x="79" y="509.4" width="7.6" height="4.6"/><rect x="80" y="517" width="6.4" height="4"/><rect x="78.4" y="523" width="8" height="4.4"/><path d="M66 511 l7 6 M66 518.4 h7 M68 525 l5 -6 M79 512 l-6 5 M80 519 h-6.6 M78.4 525 l-5 -6"/></g>
<rect x="69.4" y="517.2" width="8" height="1.8" fill="#4a8ad0"/><rect x="57.4" y="528.4" width="31.4" height="0.8" fill="#2a3a5a"/>
<path d="M587.8 475.4 V531.8" stroke="#23282e" stroke-width="0.7" stroke-dasharray="0.8 0.8"/>
<path d="M656.6 475.4 V531.8" stroke="#23282e" stroke-width="0.7" stroke-dasharray="0.8 0.8"/>
<rect x="42.6" y="534.6" width="941.2" height="6" fill="#4d6167"/><rect x="983.8" y="534.6" width="7.2" height="6" fill="#2b3038"/>
<rect x="997" y="444.8" width="3" height="87" fill="#4a5c62"/>
<rect x="585.1" y="418" width="1" height="114.6" fill="#9caaae"/>
<rect x="575" y="409.4" width="5.4" height="5.8" rx="0.8" fill="#6aa61e"/><rect x="591" y="409.4" width="5" height="5.8" rx="0.8" fill="#c42a2c"/>
<path d="M580.2 409.2 H591.2 V414.4 L585.6 419.4 L580.2 414.4Z" fill="#5c8892" stroke="#8fb4bc" stroke-width="0.5"/>
<text x="597.8" y="414.2" font-size="6" fill="#f0f0f0" letter-spacing="-0.12">0:05:48;20</text>
</svg>
<!-- TL-END -->
</body>
</html>
